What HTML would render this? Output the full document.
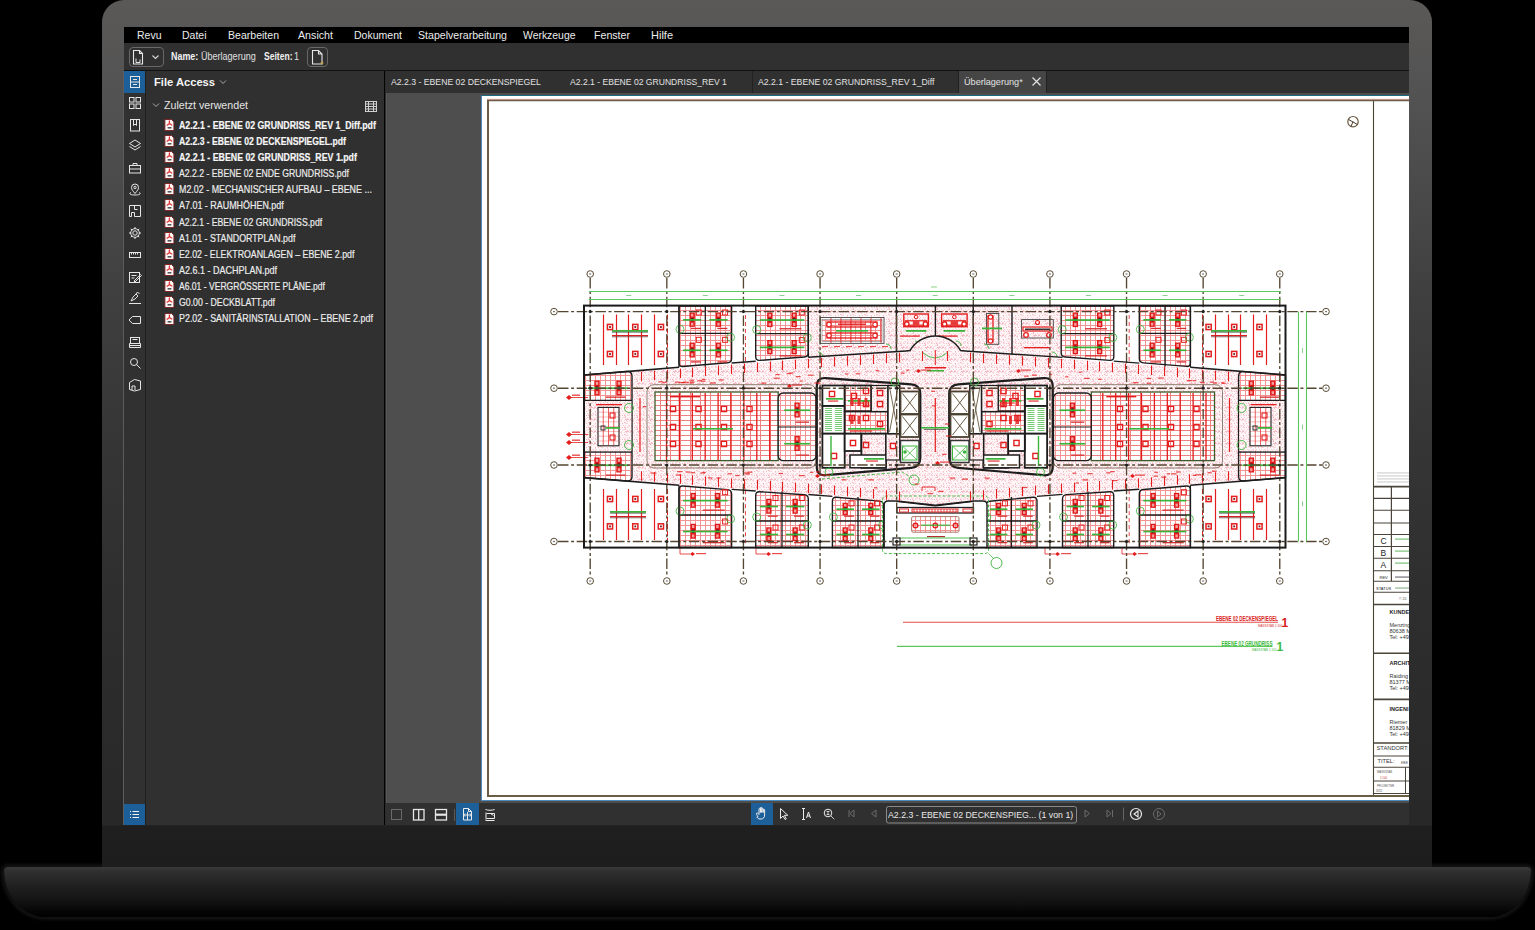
<!DOCTYPE html>
<html><head><meta charset="utf-8">
<style>
*{margin:0;padding:0;box-sizing:border-box}
html,body{width:1535px;height:930px;background:#000;overflow:hidden;font-family:"Liberation Sans",sans-serif}
div,span,svg{position:absolute}
#lid{left:102px;top:0;width:1330px;height:867px;border-radius:22px 22px 0 0;
 background:linear-gradient(to bottom,#5a5958 0px,#535252 100px,#494949 200px,#3f3f3f 300px,#353535 450px,#2e2e2e 600px,#282828 825px,#1f1f1f 826px,#1d1d1d 867px)}
#base{left:4px;top:867px;width:1527px;height:50px;border-radius:4px 4px 42px 42px/4px 4px 46px 46px;box-shadow:0 0 3px 3px #121212;
 background:linear-gradient(to bottom,#3a3a3a 0px,#303030 4px,#1f1f1f 20px,#131313 34px,#060606 44px,#000 50px)}
#menu{left:124px;top:27px;width:1285px;height:16px;background:#000}
#toolbar{left:124px;top:43px;width:1285px;height:27px;background:#303030}
#tbline{left:124px;top:70px;width:1285px;height:1px;background:#121212}
#iconstrip{left:124px;top:71px;width:21px;height:754px;background:#313131}
#stripline{left:145px;top:71px;width:1px;height:754px;background:#1f1f1f}
#edgel{left:123px;top:71px;width:1px;height:754px;background:#5a5c60}
#panel{left:146px;top:71px;width:238px;height:754px;background:#303030}
#sep{left:384px;top:71px;width:1px;height:754px;background:#030303}
#sep2{left:385px;top:71px;width:1px;height:754px;background:#2c2c2c}
#tabs{left:386px;top:71px;width:1023px;height:22px;background:#303030}
#docarea{left:386px;top:93px;width:1023px;height:710px;background:#4e4e4e;border-left:1px solid #575757}
#status{left:386px;top:803px;width:1023px;height:22px;background:#303030}
#page{left:481px;top:95px;width:928px;height:706px;background:#fff;border-left:1px solid #4d8ac0;border-top:1px solid #1b6b80;border-bottom:1px solid #4d8ac0}
.t{white-space:nowrap;color:#e6e6e6}
.blue{background:#1d5f98}

</style></head><body>
<div id="base"></div><div id="lid"></div>
<div id="menu"></div>
<span class="t" style="left:137.00px;top:28.06px;font-size:10.50px;line-height:14px;color:#ececec;transform:scaleX(0.9996);transform-origin:0 0;">Revu</span>
<span class="t" style="left:182.00px;top:28.06px;font-size:10.50px;line-height:14px;color:#ececec;transform:scaleX(0.9996);transform-origin:0 0;">Datei</span>
<span class="t" style="left:228.00px;top:28.06px;font-size:10.50px;line-height:14px;color:#ececec;transform:scaleX(1.0043);transform-origin:0 0;">Bearbeiten</span>
<span class="t" style="left:298.00px;top:28.06px;font-size:10.50px;line-height:14px;color:#ececec;transform:scaleX(1.0165);transform-origin:0 0;">Ansicht</span>
<span class="t" style="left:354.00px;top:28.06px;font-size:10.50px;line-height:14px;color:#ececec;transform:scaleX(1.0031);transform-origin:0 0;">Dokument</span>
<span class="t" style="left:418.00px;top:28.06px;font-size:10.50px;line-height:14px;color:#ececec;transform:scaleX(1.0098);transform-origin:0 0;">Stapelverarbeitung</span>
<span class="t" style="left:523.00px;top:28.06px;font-size:10.50px;line-height:14px;color:#ececec;transform:scaleX(0.9922);transform-origin:0 0;">Werkzeuge</span>
<span class="t" style="left:594.00px;top:28.06px;font-size:10.50px;line-height:14px;color:#ececec;transform:scaleX(1.0114);transform-origin:0 0;">Fenster</span>
<span class="t" style="left:651.00px;top:28.06px;font-size:10.50px;line-height:14px;color:#ececec;transform:scaleX(1.0474);transform-origin:0 0;">Hilfe</span>
<div id="toolbar"></div><div id="tbline"></div><div id="iconstrip"></div><div id="stripline"></div><div id="edgel"></div><div id="panel"></div><div id="sep"></div><div id="sep2"></div><div id="tabs"></div><div id="docarea"></div><div id="page"></div><div id="status"></div>
<div style="left:129px;top:47px;width:35px;height:20px;border:1px solid #686868;border-radius:4px"></div>
<svg style="left:129px;top:47px" width="35" height="20" viewBox="0 0 35 20">
 <path d="M4.5 3.5h6l3 3v10.5h-9z M10.5 3.5v3h3" fill="none" stroke="#e8e8e8" stroke-width="1.1"/>
 <path d="M7 15.5v-4M7 15.5h4v-3" fill="none" stroke="#e8e8e8" stroke-width="1"/>
 <path d="M23.5 8.5l3 3 3-3" fill="none" stroke="#d8d8d8" stroke-width="1.1"/>
</svg>
<div style="left:307px;top:47px;width:21px;height:20px;border:1px solid #686868;border-radius:4px"></div>
<svg style="left:307px;top:47px" width="21" height="20" viewBox="0 0 21 20">
 <path d="M5.5 3.5h6l3.5 3.5v10h-9.5z M11.5 3.5v3.5h3.5" fill="none" stroke="#e8e8e8" stroke-width="1.1"/>
 <path d="M15 14.5v3M13.5 16h3" stroke="#c9a040" stroke-width="1"/>
</svg>
<span class="t" style="left:171.20px;top:49.84px;font-size:10.00px;line-height:13px;color:#f0f0f0;font-weight:bold;transform:scaleX(0.8932);transform-origin:0 0;">Name:</span>
<span class="t" style="left:200.60px;top:49.84px;font-size:10.00px;line-height:13px;color:#e0e0e0;transform:scaleX(0.9028);transform-origin:0 0;">Überlagerung</span>
<span class="t" style="left:263.50px;top:49.84px;font-size:10.00px;line-height:13px;color:#f0f0f0;font-weight:bold;transform:scaleX(0.8549);transform-origin:0 0;">Seiten:</span>
<span class="t" style="left:293.50px;top:49.84px;font-size:10.00px;line-height:13px;color:#e0e0e0;transform:scaleX(0.8991);transform-origin:0 0;">1</span>
<div class="blue" style="left:124px;top:71px;width:21px;height:22px"></div>
<svg style="left:124px;top:70px" width="22" height="330" viewBox="0 0 22 330" fill="none" stroke="#e6e6e6" stroke-width="1">
 <g transform="translate(0,0)"><rect x="6.5" y="6.5" width="9" height="11"/><path d="M6.5 12h9M9 9.5h4M9 14.5h4"/></g>
 <g transform="translate(0,22)"><rect x="5.5" y="5.5" width="4.5" height="4.5"/><rect x="12" y="5.5" width="4.5" height="4.5"/><rect x="5.5" y="12" width="4.5" height="4.5"/><rect x="12" y="12" width="4.5" height="4.5"/></g>
 <g transform="translate(0,44)"><rect x="6.5" y="5.5" width="9" height="11.5"/><path d="M9.5 5.5v6l1.5-1.5 1.5 1.5v-6"/></g>
 <g transform="translate(0,65)"><path d="M11 5l5.5 3.5-5.5 3.5-5.5-3.5z M5.5 11.5l5.5 3.5 5.5-3.5"/></g>
 <g transform="translate(0,87)"><rect x="5.5" y="8.5" width="11" height="7.5"/><path d="M9 8.5v-2h4v2M5.5 12h11"/></g>
 <g transform="translate(0,109)"><path d="M11 14.5c-2-2.5-3.5-4-3.5-6a3.5 3.5 0 0 1 7 0c0 2-1.5 3.5-3.5 6z"/><circle cx="11" cy="8.5" r="1.2"/><path d="M7 13.5c-2 .7-2 2.5 4 2.5s6-1.8 4-2.5"/></g>
 <g transform="translate(0,130)"><path d="M5.5 5.5h11v11h-6v-4h-3v4h-2z M10.5 5.5v4h3"/></g>
 <g transform="translate(0,152)"><circle cx="11" cy="11" r="2.2"/><path d="M11 5v2M11 15v2M5 11h2M15 11h2M6.8 6.8l1.4 1.4M13.8 13.8l1.4 1.4M6.8 15.2l1.4-1.4M13.8 8.2l1.4-1.4"/><circle cx="11" cy="11" r="4.3"/></g>
 <g transform="translate(0,174)"><rect x="5.5" y="8.5" width="11" height="5"/><path d="M7.5 8.5v2M9.5 8.5v2M11.5 8.5v2M13.5 8.5v2"/></g>
 <g transform="translate(0,196)"><rect x="5.5" y="6.5" width="10" height="10"/><path d="M7.5 9.5h5M7.5 12h3M10 15l6.5-6.5 1 1-6.5 6.5z"/></g>
 <g transform="translate(0,217)"><path d="M5 16.5h12M7 14l2-4 3-3 2 2-3 3-4 2z M12 7l1.5-2 2 2"/></g>
 <g transform="translate(0,239)"><path d="M16.5 7.5h-8l-3.5 3.5 3.5 3.5h8z"/></g>
 <g transform="translate(0,261)"><rect x="6.5" y="6.5" width="9" height="6"/><path d="M5.5 12.5h11v4h-11zM5.5 14.5h11M8.5 8.5h5"/></g>
 <g transform="translate(0,282)"><circle cx="10" cy="10" r="3.5"/><path d="M12.5 12.5l4 4"/></g>
 <g transform="translate(0,304)"><path d="M5.5 8.5l5-3 6 1.5v8.5l-6 1.5-5-1.5z M8 16v-4h3v4"/></g>
</svg>
<div class="blue" style="left:124px;top:804px;width:21px;height:21px"></div>
<svg style="left:124px;top:804px" width="21" height="21" viewBox="0 0 21 21" stroke="#f0f0f0" stroke-width="1.2">
 <path d="M6 7.5h1M6 10.5h1M6 13.5h1M8.5 7.5h6.5M8.5 10.5h6.5M8.5 13.5h6.5"/>
</svg>
<span class="t" style="left:153.50px;top:75.42px;font-size:11.50px;line-height:15px;color:#f4f4f4;font-weight:bold;transform:scaleX(0.9704);transform-origin:0 0;">File Access</span>
<svg style="left:218px;top:78px" width="10" height="8" viewBox="0 0 10 8"><path d="M2 2.5l3 3 3-3" fill="none" stroke="#aaa" stroke-width="1"/></svg>
<svg style="left:151px;top:101px" width="10" height="8" viewBox="0 0 10 8"><path d="M2 2.5l3 3 3-3" fill="none" stroke="#aaa" stroke-width="1"/></svg>
<span class="t" style="left:163.50px;top:98.19px;font-size:11.00px;line-height:15px;color:#e4e4e4;transform:scaleX(0.9676);transform-origin:0 0;">Zuletzt verwendet</span>
<svg style="left:364px;top:99px" width="14" height="14" viewBox="0 0 14 14" fill="none" stroke="#d0d0d0" stroke-width="1">
 <rect x="1.5" y="2.5" width="11" height="10"/><path d="M1.5 5h11M1.5 7.5h11M1.5 10h11M4.5 2.5v10M9.5 2.5v10"/></svg>
<svg style="left:164.3px;top:118.70px" width="11" height="12" viewBox="0 0 11 12"><path d="M.9 .5h6.6l2.4 2.4v8.6h-9z" fill="#fbf7f7" stroke="#7a1c1c" stroke-width=".9"/><path d="M5.4 2v2.6M5.4 4.6l-2.3 1.6M5.4 4.6l2.4 1.4" fill="none" stroke="#e03a3a" stroke-width="1.3" stroke-linecap="round"/><rect x="3.6" y="8" width="3.8" height="1.6" fill="#555"/></svg>
<span class="t" style="left:178.60px;top:117.63px;font-size:10.60px;line-height:14px;color:#f6f6f6;font-weight:bold;transform:scaleX(0.8279);transform-origin:0 0;-webkit-text-stroke:0.2px currentColor;">A2.2.1 - EBENE 02 GRUNDRISS_REV 1_Diff.pdf</span>
<svg style="left:164.3px;top:134.85px" width="11" height="12" viewBox="0 0 11 12"><path d="M.9 .5h6.6l2.4 2.4v8.6h-9z" fill="#fbf7f7" stroke="#7a1c1c" stroke-width=".9"/><path d="M5.4 2v2.6M5.4 4.6l-2.3 1.6M5.4 4.6l2.4 1.4" fill="none" stroke="#e03a3a" stroke-width="1.3" stroke-linecap="round"/><rect x="3.6" y="8" width="3.8" height="1.6" fill="#555"/></svg>
<span class="t" style="left:178.60px;top:133.78px;font-size:10.60px;line-height:14px;color:#f6f6f6;font-weight:bold;transform:scaleX(0.8147);transform-origin:0 0;-webkit-text-stroke:0.2px currentColor;">A2.2.3 - EBENE 02 DECKENSPIEGEL.pdf</span>
<svg style="left:164.3px;top:151.00px" width="11" height="12" viewBox="0 0 11 12"><path d="M.9 .5h6.6l2.4 2.4v8.6h-9z" fill="#fbf7f7" stroke="#7a1c1c" stroke-width=".9"/><path d="M5.4 2v2.6M5.4 4.6l-2.3 1.6M5.4 4.6l2.4 1.4" fill="none" stroke="#e03a3a" stroke-width="1.3" stroke-linecap="round"/><rect x="3.6" y="8" width="3.8" height="1.6" fill="#555"/></svg>
<span class="t" style="left:178.60px;top:149.93px;font-size:10.60px;line-height:14px;color:#f6f6f6;font-weight:bold;transform:scaleX(0.8302);transform-origin:0 0;-webkit-text-stroke:0.2px currentColor;">A2.2.1 - EBENE 02 GRUNDRISS_REV 1.pdf</span>
<svg style="left:164.3px;top:167.15px" width="11" height="12" viewBox="0 0 11 12"><path d="M.9 .5h6.6l2.4 2.4v8.6h-9z" fill="#fbf7f7" stroke="#7a1c1c" stroke-width=".9"/><path d="M5.4 2v2.6M5.4 4.6l-2.3 1.6M5.4 4.6l2.4 1.4" fill="none" stroke="#e03a3a" stroke-width="1.3" stroke-linecap="round"/><rect x="3.6" y="8" width="3.8" height="1.6" fill="#555"/></svg>
<span class="t" style="left:178.60px;top:166.08px;font-size:10.60px;line-height:14px;color:#ececec;transform:scaleX(0.8198);transform-origin:0 0;-webkit-text-stroke:0.2px currentColor;">A2.2.2 - EBENE 02 ENDE GRUNDRISS.pdf</span>
<svg style="left:164.3px;top:183.30px" width="11" height="12" viewBox="0 0 11 12"><path d="M.9 .5h6.6l2.4 2.4v8.6h-9z" fill="#fbf7f7" stroke="#7a1c1c" stroke-width=".9"/><path d="M5.4 2v2.6M5.4 4.6l-2.3 1.6M5.4 4.6l2.4 1.4" fill="none" stroke="#e03a3a" stroke-width="1.3" stroke-linecap="round"/><rect x="3.6" y="8" width="3.8" height="1.6" fill="#555"/></svg>
<span class="t" style="left:178.60px;top:182.23px;font-size:10.60px;line-height:14px;color:#ececec;transform:scaleX(0.8401);transform-origin:0 0;-webkit-text-stroke:0.2px currentColor;">M2.02 - MECHANISCHER AUFBAU – EBENE ...</span>
<svg style="left:164.3px;top:199.45px" width="11" height="12" viewBox="0 0 11 12"><path d="M.9 .5h6.6l2.4 2.4v8.6h-9z" fill="#fbf7f7" stroke="#7a1c1c" stroke-width=".9"/><path d="M5.4 2v2.6M5.4 4.6l-2.3 1.6M5.4 4.6l2.4 1.4" fill="none" stroke="#e03a3a" stroke-width="1.3" stroke-linecap="round"/><rect x="3.6" y="8" width="3.8" height="1.6" fill="#555"/></svg>
<span class="t" style="left:178.60px;top:198.38px;font-size:10.60px;line-height:14px;color:#ececec;transform:scaleX(0.8432);transform-origin:0 0;-webkit-text-stroke:0.2px currentColor;">A7.01 - RAUMHÖHEN.pdf</span>
<svg style="left:164.3px;top:215.60px" width="11" height="12" viewBox="0 0 11 12"><path d="M.9 .5h6.6l2.4 2.4v8.6h-9z" fill="#fbf7f7" stroke="#7a1c1c" stroke-width=".9"/><path d="M5.4 2v2.6M5.4 4.6l-2.3 1.6M5.4 4.6l2.4 1.4" fill="none" stroke="#e03a3a" stroke-width="1.3" stroke-linecap="round"/><rect x="3.6" y="8" width="3.8" height="1.6" fill="#555"/></svg>
<span class="t" style="left:178.60px;top:214.53px;font-size:10.60px;line-height:14px;color:#ececec;transform:scaleX(0.8185);transform-origin:0 0;-webkit-text-stroke:0.2px currentColor;">A2.2.1 - EBENE 02 GRUNDRISS.pdf</span>
<svg style="left:164.3px;top:231.75px" width="11" height="12" viewBox="0 0 11 12"><path d="M.9 .5h6.6l2.4 2.4v8.6h-9z" fill="#fbf7f7" stroke="#7a1c1c" stroke-width=".9"/><path d="M5.4 2v2.6M5.4 4.6l-2.3 1.6M5.4 4.6l2.4 1.4" fill="none" stroke="#e03a3a" stroke-width="1.3" stroke-linecap="round"/><rect x="3.6" y="8" width="3.8" height="1.6" fill="#555"/></svg>
<span class="t" style="left:178.60px;top:230.68px;font-size:10.60px;line-height:14px;color:#ececec;transform:scaleX(0.8326);transform-origin:0 0;-webkit-text-stroke:0.2px currentColor;">A1.01 - STANDORTPLAN.pdf</span>
<svg style="left:164.3px;top:247.90px" width="11" height="12" viewBox="0 0 11 12"><path d="M.9 .5h6.6l2.4 2.4v8.6h-9z" fill="#fbf7f7" stroke="#7a1c1c" stroke-width=".9"/><path d="M5.4 2v2.6M5.4 4.6l-2.3 1.6M5.4 4.6l2.4 1.4" fill="none" stroke="#e03a3a" stroke-width="1.3" stroke-linecap="round"/><rect x="3.6" y="8" width="3.8" height="1.6" fill="#555"/></svg>
<span class="t" style="left:178.60px;top:246.83px;font-size:10.60px;line-height:14px;color:#ececec;transform:scaleX(0.8298);transform-origin:0 0;-webkit-text-stroke:0.2px currentColor;">E2.02 - ELEKTROANLAGEN – EBENE 2.pdf</span>
<svg style="left:164.3px;top:264.05px" width="11" height="12" viewBox="0 0 11 12"><path d="M.9 .5h6.6l2.4 2.4v8.6h-9z" fill="#fbf7f7" stroke="#7a1c1c" stroke-width=".9"/><path d="M5.4 2v2.6M5.4 4.6l-2.3 1.6M5.4 4.6l2.4 1.4" fill="none" stroke="#e03a3a" stroke-width="1.3" stroke-linecap="round"/><rect x="3.6" y="8" width="3.8" height="1.6" fill="#555"/></svg>
<span class="t" style="left:178.60px;top:262.98px;font-size:10.60px;line-height:14px;color:#ececec;transform:scaleX(0.8487);transform-origin:0 0;-webkit-text-stroke:0.2px currentColor;">A2.6.1 - DACHPLAN.pdf</span>
<svg style="left:164.3px;top:280.20px" width="11" height="12" viewBox="0 0 11 12"><path d="M.9 .5h6.6l2.4 2.4v8.6h-9z" fill="#fbf7f7" stroke="#7a1c1c" stroke-width=".9"/><path d="M5.4 2v2.6M5.4 4.6l-2.3 1.6M5.4 4.6l2.4 1.4" fill="none" stroke="#e03a3a" stroke-width="1.3" stroke-linecap="round"/><rect x="3.6" y="8" width="3.8" height="1.6" fill="#555"/></svg>
<span class="t" style="left:178.60px;top:279.13px;font-size:10.60px;line-height:14px;color:#ececec;transform:scaleX(0.8081);transform-origin:0 0;-webkit-text-stroke:0.2px currentColor;">A6.01 - VERGRÖSSERTE PLÄNE.pdf</span>
<svg style="left:164.3px;top:296.35px" width="11" height="12" viewBox="0 0 11 12"><path d="M.9 .5h6.6l2.4 2.4v8.6h-9z" fill="#fbf7f7" stroke="#7a1c1c" stroke-width=".9"/><path d="M5.4 2v2.6M5.4 4.6l-2.3 1.6M5.4 4.6l2.4 1.4" fill="none" stroke="#e03a3a" stroke-width="1.3" stroke-linecap="round"/><rect x="3.6" y="8" width="3.8" height="1.6" fill="#555"/></svg>
<span class="t" style="left:178.60px;top:295.28px;font-size:10.60px;line-height:14px;color:#ececec;transform:scaleX(0.8244);transform-origin:0 0;-webkit-text-stroke:0.2px currentColor;">G0.00 - DECKBLATT.pdf</span>
<svg style="left:164.3px;top:312.50px" width="11" height="12" viewBox="0 0 11 12"><path d="M.9 .5h6.6l2.4 2.4v8.6h-9z" fill="#fbf7f7" stroke="#7a1c1c" stroke-width=".9"/><path d="M5.4 2v2.6M5.4 4.6l-2.3 1.6M5.4 4.6l2.4 1.4" fill="none" stroke="#e03a3a" stroke-width="1.3" stroke-linecap="round"/><rect x="3.6" y="8" width="3.8" height="1.6" fill="#555"/></svg>
<span class="t" style="left:178.60px;top:311.43px;font-size:10.60px;line-height:14px;color:#ececec;transform:scaleX(0.8394);transform-origin:0 0;-webkit-text-stroke:0.2px currentColor;">P2.02 - SANITÄRINSTALLATION – EBENE 2.pdf</span>
<div style="left:752px;top:71px;width:1px;height:22px;background:#222"></div>
<div style="left:958px;top:71px;width:89px;height:22px;background:#454545;border-left:1px solid #222;border-right:1px solid #222"></div>
<span class="t" style="left:390.80px;top:75.17px;font-size:9.60px;line-height:13px;color:#e2e2e2;transform:scaleX(0.9040);transform-origin:0 0;">A2.2.3 - EBENE 02 DECKENSPIEGEL</span>
<span class="t" style="left:570.30px;top:75.17px;font-size:9.60px;line-height:13px;color:#e2e2e2;transform:scaleX(0.8944);transform-origin:0 0;">A2.2.1 - EBENE 02 GRUNDRISS_REV 1</span>
<span class="t" style="left:757.50px;top:75.17px;font-size:9.60px;line-height:13px;color:#e2e2e2;transform:scaleX(0.9047);transform-origin:0 0;">A2.2.1 - EBENE 02 GRUNDRISS_REV 1_Diff</span>
<span class="t" style="left:963.80px;top:75.17px;font-size:9.60px;line-height:13px;color:#e2e2e2;transform:scaleX(0.9483);transform-origin:0 0;">Überlagerung*</span>
<svg style="left:1031px;top:76px" width="11" height="11" viewBox="0 0 11 11"><path d="M1.5 1.5l8 8M9.5 1.5l-8 8" stroke="#e0e0e0" stroke-width="1.2"/></svg>
<svg style="left:386px;top:803px" width="1023" height="22" viewBox="386 803 1023 22" fill="none" stroke="#e6e6e6" stroke-width="1">
 <rect x="391.5" y="809.5" width="10" height="10" stroke="#6a6a6a"/>
 <rect x="413.5" y="809.5" width="10.5" height="10.5" stroke-width="1.3"/><path d="M418.7 809.5v10.5" stroke-width="1.3"/>
 <rect x="435.5" y="809.5" width="11" height="10.5" stroke-width="1.3"/><path d="M435.5 814.7h11" stroke-width="2.2"/>
 <path d="M454.5 809v12" stroke="#5a5a5a"/>
</svg>
<div class="blue" style="left:456px;top:803px;width:23px;height:22px"></div>
<svg style="left:386px;top:803px" width="1023" height="22" viewBox="386 803 1023 22" fill="none" stroke="#ececec" stroke-width="1">
 <path d="M463.5 808.5h5l3 3v8.5h-8z M468.5 808.5v3h3 M467.5 812v8 M463.5 815h8 M465 813.5l-1.5 1.5 1.5 1.5 M470 813.5l1.5 1.5-1.5 1.5"/>
 <path d="M485.5 809.5c2 1 7 1 9 0 M485.5 820.5h9 M486 812.5v7 M486.5 813.5h8v5h-8 M490.5 813.5l3 2" />
 <path d="M751 803h0"/>
</svg>
<div class="blue" style="left:751px;top:803px;width:22px;height:22px"></div>
<svg style="left:386px;top:803px" width="1023" height="22" viewBox="386 803 1023 22" fill="none" stroke="#ececec" stroke-width="1">
 <path d="M758 816.5c-1.2-1.5-2-3-1.2-3.5.7-.4 1.6.6 2.2 1.5v-5.5c0-1 1.4-1 1.4 0v3.5-4.5c0-1 1.4-1 1.4 0v4.5-3.5c0-1 1.4-1 1.4 0v3.5-2.5c0-1 1.4-1 1.4 0v5c0 2.5-1.4 4-3.6 4h-1c-1.5 0-2.3-.8-3.2-2z"/>
 <path d="M780.5 808.5v10l2.5-2.5 2 3.5 1.3-.7-2-3.5h3.5z"/>
 <path d="M802 808.5h3M802 819.5h3M803.5 808.5v11 M806.5 818l2-6 2 6M807.2 816h2.6"/>
 <circle cx="828" cy="813" r="3.8"/><path d="M830.8 815.8l3.5 3.5M826.5 811.5h3M826.5 814.5h3M828 811.5v3" stroke-width=".8"/>
 <path d="M849 810v7M854 810l-4 3.5 4 3.5z" stroke="#6a6a6a"/>
 <path d="M876 810l-4.5 3.5 4.5 3.5z" stroke="#6a6a6a"/>
 <rect x="886.5" y="806.5" width="190" height="16.5" rx="2" stroke="#8a8a8a"/>
 <path d="M1085 810l4.5 3.5-4.5 3.5z" stroke="#6a6a6a"/>
 <path d="M1107 810l4 3.5-4 3.5z M1112.5 810v7" stroke="#6a6a6a"/>
 <path d="M1123.5 807.5v13" stroke="#666"/>
 <circle cx="1136" cy="814" r="5.5" stroke-width="1.2"/><path d="M1138 811l-4 3 4 3z" stroke-width="1.1"/>
 <circle cx="1159" cy="814" r="5.5" stroke="#6a6a6a"/><path d="M1157.5 811l3.5 3-3.5 3z" stroke="#6a6a6a"/>
</svg>
<span class="t" style="left:888.20px;top:807.77px;font-size:9.60px;line-height:13px;color:#e8e8e8;transform:scaleX(0.9140);transform-origin:0 0;">A2.2.3 - EBENE 02 DECKENSPIEG... (1 von 1)</span><svg style="left:0;top:0" width="1535" height="930" viewBox="0 0 1535 930"><defs>
<clipPath id="pg"><rect x="483" y="96" width="926" height="704"/></clipPath>
<pattern id="dots" patternUnits="userSpaceOnUse" width="12" height="12"><rect width="12" height="12" fill="#fff6f7"/><rect x="0" y="0" width="1" height="1" fill="#f9d4da"/><rect x="2" y="0" width="1" height="1" fill="#f4b9c2"/><rect x="5" y="0" width="1" height="1" fill="#f9d4da"/><rect x="6" y="0" width="1" height="1" fill="#f9d4da"/><rect x="8" y="0" width="1" height="1" fill="#f9d4da"/><rect x="9" y="0" width="1" height="1" fill="#f9d4da"/><rect x="3" y="1" width="1" height="1" fill="#f9d4da"/><rect x="9" y="1" width="1" height="1" fill="#f9d4da"/><rect x="0" y="2" width="1" height="1" fill="#f4b9c2"/><rect x="1" y="2" width="1" height="1" fill="#f9d4da"/><rect x="1" y="3" width="1" height="1" fill="#f9d4da"/><rect x="2" y="3" width="1" height="1" fill="#f9d4da"/><rect x="3" y="3" width="1" height="1" fill="#f9d4da"/><rect x="7" y="3" width="1" height="1" fill="#f4b9c2"/><rect x="10" y="3" width="1" height="1" fill="#f4b9c2"/><rect x="7" y="4" width="1" height="1" fill="#f9d4da"/><rect x="1" y="5" width="1" height="1" fill="#f9d4da"/><rect x="4" y="5" width="1" height="1" fill="#f9d4da"/><rect x="5" y="5" width="1" height="1" fill="#f9d4da"/><rect x="8" y="5" width="1" height="1" fill="#f9d4da"/><rect x="11" y="5" width="1" height="1" fill="#f9d4da"/><rect x="0" y="6" width="1" height="1" fill="#f9d4da"/><rect x="3" y="6" width="1" height="1" fill="#f9d4da"/><rect x="5" y="6" width="1" height="1" fill="#f9d4da"/><rect x="7" y="6" width="1" height="1" fill="#f4b9c2"/><rect x="0" y="7" width="1" height="1" fill="#f4b9c2"/><rect x="1" y="7" width="1" height="1" fill="#f9d4da"/><rect x="3" y="7" width="1" height="1" fill="#f9d4da"/><rect x="4" y="7" width="1" height="1" fill="#f9d4da"/><rect x="7" y="7" width="1" height="1" fill="#f9d4da"/><rect x="8" y="7" width="1" height="1" fill="#f9d4da"/><rect x="10" y="7" width="1" height="1" fill="#f4b9c2"/><rect x="1" y="8" width="1" height="1" fill="#f4b9c2"/><rect x="0" y="9" width="1" height="1" fill="#f9d4da"/><rect x="1" y="9" width="1" height="1" fill="#f4b9c2"/><rect x="5" y="9" width="1" height="1" fill="#f9d4da"/><rect x="8" y="9" width="1" height="1" fill="#f9d4da"/><rect x="11" y="9" width="1" height="1" fill="#f9d4da"/><rect x="3" y="10" width="1" height="1" fill="#f4b9c2"/><rect x="6" y="10" width="1" height="1" fill="#f9d4da"/><rect x="7" y="10" width="1" height="1" fill="#f9d4da"/><rect x="10" y="10" width="1" height="1" fill="#f9d4da"/><rect x="1" y="11" width="1" height="1" fill="#f4b9c2"/><rect x="2" y="11" width="1" height="1" fill="#f4b9c2"/><rect x="3" y="11" width="1" height="1" fill="#f4b9c2"/><rect x="4" y="11" width="1" height="1" fill="#f4b9c2"/><rect x="6" y="11" width="1" height="1" fill="#f4b9c2"/><rect x="7" y="11" width="1" height="1" fill="#f4b9c2"/><rect x="9" y="11" width="1" height="1" fill="#f9d4da"/></pattern>
<pattern id="grid" patternUnits="userSpaceOnUse" width="5" height="5"><rect width="5" height="5" fill="#fff"/><rect x="0" y="0" width="5" height="1" fill="#f29494"/><rect x="0" y="0" width="1" height="5" fill="#f29494"/></pattern>
<pattern id="grid2" patternUnits="userSpaceOnUse" width="10" height="5"><rect width="10" height="5" fill="#fff"/><rect x="0" y="0" width="10" height="1" fill="#ee8080"/><rect x="0" y="0" width="1" height="5" fill="#ee8080"/></pattern>
</defs>
<g clip-path="url(#pg)">
<path d="M584 375 L934.75 349.53 L1285.5 375 L1285.5 477.6 L934.75 504.96 L584 477.6Z" fill="url(#dots)"/>
<path d="M808.3 306 L1062.5 306 L1062.5 357.34 L808.3 357.25Z" fill="url(#dots)"/>
<line x1="603.5" y1="314.5" x2="603.5" y2="365" stroke="#e41e1e" stroke-width="1.2"/>
<line x1="616.5" y1="314.5" x2="616.5" y2="365" stroke="#e41e1e" stroke-width="1.2"/>
<line x1="628.5" y1="314.5" x2="628.5" y2="365" stroke="#e41e1e" stroke-width="1.2"/>
<line x1="641.5" y1="314.5" x2="641.5" y2="365" stroke="#e41e1e" stroke-width="1.2"/>
<line x1="654.5" y1="314.5" x2="654.5" y2="365" stroke="#e41e1e" stroke-width="1.2"/>
<line x1="667.5" y1="314.5" x2="667.5" y2="365" stroke="#e41e1e" stroke-width="1" stroke-dasharray="5 2"/>
<rect x="607.4" y="324.4" width="5.2" height="5.2" fill="none" stroke="#e41e1e" stroke-width="1.5"/>
<rect x="609.1" y="326.1" width="1.8" height="1.8" fill="#6a2020"/>
<rect x="632.7" y="324.4" width="5.2" height="5.2" fill="none" stroke="#e41e1e" stroke-width="1.5"/>
<rect x="634.4" y="326.1" width="1.8" height="1.8" fill="#6a2020"/>
<rect x="658.3" y="324.4" width="5.2" height="5.2" fill="none" stroke="#e41e1e" stroke-width="1.5"/>
<rect x="660" y="326.1" width="1.8" height="1.8" fill="#6a2020"/>
<rect x="607.4" y="351.4" width="5.2" height="5.2" fill="none" stroke="#e41e1e" stroke-width="1.5"/>
<rect x="609.1" y="353.1" width="1.8" height="1.8" fill="#6a2020"/>
<rect x="632.7" y="351.4" width="5.2" height="5.2" fill="none" stroke="#e41e1e" stroke-width="1.5"/>
<rect x="634.4" y="353.1" width="1.8" height="1.8" fill="#6a2020"/>
<rect x="658.3" y="351.4" width="5.2" height="5.2" fill="none" stroke="#e41e1e" stroke-width="1.5"/>
<rect x="660" y="353.1" width="1.8" height="1.8" fill="#6a2020"/>
<line x1="1202.5" y1="314.5" x2="1202.5" y2="365" stroke="#e41e1e" stroke-width="1" stroke-dasharray="5 2"/>
<line x1="1215.5" y1="314.5" x2="1215.5" y2="365" stroke="#e41e1e" stroke-width="1.2"/>
<line x1="1228.5" y1="314.5" x2="1228.5" y2="365" stroke="#e41e1e" stroke-width="1.2"/>
<line x1="1240.5" y1="314.5" x2="1240.5" y2="365" stroke="#e41e1e" stroke-width="1.2"/>
<line x1="1253.5" y1="314.5" x2="1253.5" y2="365" stroke="#e41e1e" stroke-width="1.2"/>
<line x1="1266.5" y1="314.5" x2="1266.5" y2="365" stroke="#e41e1e" stroke-width="1.2"/>
<rect x="1256.9" y="324.4" width="5.2" height="5.2" fill="none" stroke="#e41e1e" stroke-width="1.5"/>
<rect x="1258.6" y="326.1" width="1.8" height="1.8" fill="#6a2020"/>
<rect x="1231.6" y="324.4" width="5.2" height="5.2" fill="none" stroke="#e41e1e" stroke-width="1.5"/>
<rect x="1233.3" y="326.1" width="1.8" height="1.8" fill="#6a2020"/>
<rect x="1206" y="324.4" width="5.2" height="5.2" fill="none" stroke="#e41e1e" stroke-width="1.5"/>
<rect x="1207.7" y="326.1" width="1.8" height="1.8" fill="#6a2020"/>
<rect x="1256.9" y="351.4" width="5.2" height="5.2" fill="none" stroke="#e41e1e" stroke-width="1.5"/>
<rect x="1258.6" y="353.1" width="1.8" height="1.8" fill="#6a2020"/>
<rect x="1231.6" y="351.4" width="5.2" height="5.2" fill="none" stroke="#e41e1e" stroke-width="1.5"/>
<rect x="1233.3" y="353.1" width="1.8" height="1.8" fill="#6a2020"/>
<rect x="1206" y="351.4" width="5.2" height="5.2" fill="none" stroke="#e41e1e" stroke-width="1.5"/>
<rect x="1207.7" y="353.1" width="1.8" height="1.8" fill="#6a2020"/>
<line x1="603.5" y1="489" x2="603.5" y2="540" stroke="#e41e1e" stroke-width="1.2"/>
<line x1="616.5" y1="489" x2="616.5" y2="540" stroke="#e41e1e" stroke-width="1.2"/>
<line x1="628.5" y1="489" x2="628.5" y2="540" stroke="#e41e1e" stroke-width="1.2"/>
<line x1="641.5" y1="489" x2="641.5" y2="540" stroke="#e41e1e" stroke-width="1.2"/>
<line x1="654.5" y1="489" x2="654.5" y2="540" stroke="#e41e1e" stroke-width="1.2"/>
<line x1="667.5" y1="489" x2="667.5" y2="540" stroke="#e41e1e" stroke-width="1" stroke-dasharray="5 2"/>
<rect x="607.4" y="496.4" width="5.2" height="5.2" fill="none" stroke="#e41e1e" stroke-width="1.5"/>
<rect x="609.1" y="498.1" width="1.8" height="1.8" fill="#6a2020"/>
<rect x="632.7" y="496.4" width="5.2" height="5.2" fill="none" stroke="#e41e1e" stroke-width="1.5"/>
<rect x="634.4" y="498.1" width="1.8" height="1.8" fill="#6a2020"/>
<rect x="658.3" y="496.4" width="5.2" height="5.2" fill="none" stroke="#e41e1e" stroke-width="1.5"/>
<rect x="660" y="498.1" width="1.8" height="1.8" fill="#6a2020"/>
<rect x="607.4" y="523.8" width="5.2" height="5.2" fill="none" stroke="#e41e1e" stroke-width="1.5"/>
<rect x="609.1" y="525.5" width="1.8" height="1.8" fill="#6a2020"/>
<rect x="632.7" y="523.8" width="5.2" height="5.2" fill="none" stroke="#e41e1e" stroke-width="1.5"/>
<rect x="634.4" y="525.5" width="1.8" height="1.8" fill="#6a2020"/>
<rect x="658.3" y="523.8" width="5.2" height="5.2" fill="none" stroke="#e41e1e" stroke-width="1.5"/>
<rect x="660" y="525.5" width="1.8" height="1.8" fill="#6a2020"/>
<line x1="1202.5" y1="489" x2="1202.5" y2="540" stroke="#e41e1e" stroke-width="1" stroke-dasharray="5 2"/>
<line x1="1215.5" y1="489" x2="1215.5" y2="540" stroke="#e41e1e" stroke-width="1.2"/>
<line x1="1228.5" y1="489" x2="1228.5" y2="540" stroke="#e41e1e" stroke-width="1.2"/>
<line x1="1240.5" y1="489" x2="1240.5" y2="540" stroke="#e41e1e" stroke-width="1.2"/>
<line x1="1253.5" y1="489" x2="1253.5" y2="540" stroke="#e41e1e" stroke-width="1.2"/>
<line x1="1266.5" y1="489" x2="1266.5" y2="540" stroke="#e41e1e" stroke-width="1.2"/>
<rect x="1256.9" y="496.4" width="5.2" height="5.2" fill="none" stroke="#e41e1e" stroke-width="1.5"/>
<rect x="1258.6" y="498.1" width="1.8" height="1.8" fill="#6a2020"/>
<rect x="1231.6" y="496.4" width="5.2" height="5.2" fill="none" stroke="#e41e1e" stroke-width="1.5"/>
<rect x="1233.3" y="498.1" width="1.8" height="1.8" fill="#6a2020"/>
<rect x="1206" y="496.4" width="5.2" height="5.2" fill="none" stroke="#e41e1e" stroke-width="1.5"/>
<rect x="1207.7" y="498.1" width="1.8" height="1.8" fill="#6a2020"/>
<rect x="1256.9" y="523.8" width="5.2" height="5.2" fill="none" stroke="#e41e1e" stroke-width="1.5"/>
<rect x="1258.6" y="525.5" width="1.8" height="1.8" fill="#6a2020"/>
<rect x="1231.6" y="523.8" width="5.2" height="5.2" fill="none" stroke="#e41e1e" stroke-width="1.5"/>
<rect x="1233.3" y="525.5" width="1.8" height="1.8" fill="#6a2020"/>
<rect x="1206" y="523.8" width="5.2" height="5.2" fill="none" stroke="#e41e1e" stroke-width="1.5"/>
<rect x="1207.7" y="525.5" width="1.8" height="1.8" fill="#6a2020"/>
<rect x="612" y="330" width="36" height="1.8" fill="#3cb43c"/>
<rect x="612" y="331.8" width="36" height="0.7" fill="#444"/>
<rect x="612" y="335" width="36" height="1.4" fill="#d82020"/>
<rect x="612" y="336.6" width="36" height="0.6" fill="#444"/>
<rect x="1211" y="330" width="36" height="1.8" fill="#3cb43c"/>
<rect x="1211" y="331.8" width="36" height="0.7" fill="#444"/>
<rect x="1211" y="335" width="36" height="1.4" fill="#d82020"/>
<rect x="1211" y="336.6" width="36" height="0.6" fill="#444"/>
<rect x="610" y="511" width="36" height="1.8" fill="#3cb43c"/>
<rect x="610" y="512.8" width="36" height="0.7" fill="#444"/>
<rect x="610" y="516" width="36" height="1.4" fill="#d82020"/>
<rect x="610" y="517.6" width="36" height="0.6" fill="#444"/>
<rect x="1219" y="511" width="36" height="1.8" fill="#3cb43c"/>
<rect x="1219" y="512.8" width="36" height="0.7" fill="#444"/>
<rect x="1219" y="516" width="36" height="1.4" fill="#d82020"/>
<rect x="1219" y="517.6" width="36" height="0.6" fill="#444"/>
<path d="M679 306 Q679 306 679 306L731.6 306 Q731.6 306 731.6 306L731.6 358.48 Q731.6 362.48 727.61 362.8L682.99 366.43 Q679 366.76 679 362.76Z" fill="url(#grid)" stroke="#1d1d1d" stroke-width="1.4"/>
<line x1="705.3" y1="306" x2="705.3" y2="366.76" stroke="#1d1d1d" stroke-width="1.3"/>
<line x1="679" y1="333.3" x2="731.6" y2="333.3" stroke="#1d1d1d" stroke-width="1.3"/>
<rect x="689.45" y="312.43" width="5.4" height="14.45" fill="#e01818"/>
<rect x="690.95" y="313.73" width="2.4" height="2.89" fill="#f4a0a0"/>
<rect x="690.95" y="322.68" width="2.4" height="2.89" fill="#f4a0a0"/>
<circle cx="692.15" cy="319.65" r="1.7" fill="#2a2a2a"/>
<rect x="683" y="319.05" width="18.3" height="1.7" fill="#3cb43c"/>
<rect x="691.03" y="327.8" width="10.03" height="1.3" fill="#d83030"/>
<rect x="696.3" y="310" width="5" height="5" fill="none" stroke="#e41e1e" stroke-width="1"/>
<rect x="689.45" y="342.53" width="5.4" height="15" fill="#e01818"/>
<rect x="690.95" y="343.83" width="2.4" height="3" fill="#f4a0a0"/>
<rect x="690.95" y="353.23" width="2.4" height="3" fill="#f4a0a0"/>
<circle cx="692.15" cy="350.03" r="1.7" fill="#2a2a2a"/>
<rect x="683" y="349.43" width="18.3" height="1.7" fill="#3cb43c"/>
<rect x="691.03" y="361.26" width="10.03" height="1.3" fill="#d83030"/>
<rect x="696.3" y="337.3" width="5" height="5" fill="none" stroke="#e41e1e" stroke-width="1"/>
<rect x="715.75" y="312.43" width="5.4" height="14.45" fill="#e01818"/>
<rect x="717.25" y="313.73" width="2.4" height="2.89" fill="#f4a0a0"/>
<rect x="717.25" y="322.68" width="2.4" height="2.89" fill="#f4a0a0"/>
<circle cx="718.45" cy="319.65" r="1.7" fill="#2a2a2a"/>
<rect x="709.3" y="319.05" width="18.3" height="1.7" fill="#3cb43c"/>
<rect x="717.34" y="327.8" width="10.04" height="1.3" fill="#d83030"/>
<rect x="722.6" y="310" width="5" height="5" fill="none" stroke="#e41e1e" stroke-width="1"/>
<rect x="715.75" y="342.53" width="5.4" height="15" fill="#e01818"/>
<rect x="717.25" y="343.83" width="2.4" height="3" fill="#f4a0a0"/>
<rect x="717.25" y="353.23" width="2.4" height="3" fill="#f4a0a0"/>
<circle cx="718.45" cy="350.03" r="1.7" fill="#2a2a2a"/>
<rect x="709.3" y="349.43" width="18.3" height="1.7" fill="#3cb43c"/>
<rect x="717.34" y="361.26" width="10.04" height="1.3" fill="#d83030"/>
<rect x="722.6" y="337.3" width="5" height="5" fill="none" stroke="#e41e1e" stroke-width="1"/>
<circle cx="680" cy="329.3" r="4" fill="none" stroke="#3cb43c" stroke-width="0.8"/>
<circle cx="730.6" cy="337.3" r="4" fill="none" stroke="#3cb43c" stroke-width="0.8"/>
<path d="M755.7 306 Q755.7 306 755.7 306L808.3 306 Q808.3 306 808.3 306L808.3 352.75 Q808.3 356.75 804.31 357.05L759.69 360.38 Q755.7 360.68 755.7 356.68Z" fill="url(#grid)" stroke="#1d1d1d" stroke-width="1.4"/>
<line x1="755.7" y1="333.6" x2="808.3" y2="333.6" stroke="#1d1d1d" stroke-width="1.3"/>
<rect x="767.15" y="312.48" width="5.4" height="14.63" fill="#e01818"/>
<rect x="768.65" y="313.78" width="2.4" height="2.93" fill="#f4a0a0"/>
<rect x="768.65" y="322.89" width="2.4" height="2.93" fill="#f4a0a0"/>
<circle cx="769.85" cy="319.8" r="1.7" fill="#2a2a2a"/>
<rect x="791.45" y="312.48" width="5.4" height="14.63" fill="#e01818"/>
<rect x="792.95" y="313.78" width="2.4" height="2.93" fill="#f4a0a0"/>
<rect x="792.95" y="322.89" width="2.4" height="2.93" fill="#f4a0a0"/>
<circle cx="794.15" cy="319.8" r="1.7" fill="#2a2a2a"/>
<rect x="759.7" y="319.2" width="44.6" height="1.7" fill="#3cb43c"/>
<rect x="779.57" y="328.1" width="21.87" height="1.3" fill="#d83030"/>
<rect x="799.3" y="310" width="5" height="5" fill="none" stroke="#e41e1e" stroke-width="1"/>
<rect x="767.15" y="339.98" width="5.4" height="14.31" fill="#e01818"/>
<rect x="768.65" y="341.28" width="2.4" height="2.86" fill="#f4a0a0"/>
<rect x="768.65" y="350.13" width="2.4" height="2.86" fill="#f4a0a0"/>
<circle cx="769.85" cy="347.14" r="1.7" fill="#2a2a2a"/>
<rect x="791.45" y="339.98" width="5.4" height="14.31" fill="#e01818"/>
<rect x="792.95" y="341.28" width="2.4" height="2.86" fill="#f4a0a0"/>
<rect x="792.95" y="350.13" width="2.4" height="2.86" fill="#f4a0a0"/>
<circle cx="794.15" cy="347.14" r="1.7" fill="#2a2a2a"/>
<rect x="759.7" y="346.54" width="44.6" height="1.7" fill="#3cb43c"/>
<rect x="779.57" y="355.18" width="21.87" height="1.3" fill="#d83030"/>
<rect x="799.3" y="337.6" width="5" height="5" fill="none" stroke="#e41e1e" stroke-width="1"/>
<circle cx="756.7" cy="329.6" r="4" fill="none" stroke="#3cb43c" stroke-width="0.8"/>
<circle cx="807.3" cy="337.6" r="4" fill="none" stroke="#3cb43c" stroke-width="0.8"/>
<path d="M1061.2 306 Q1061.2 306 1061.2 306L1113.8 306 Q1113.8 306 1113.8 306L1113.8 356.68 Q1113.8 360.68 1109.81 360.38L1065.19 357.05 Q1061.2 356.75 1061.2 352.75Z" fill="url(#grid)" stroke="#1d1d1d" stroke-width="1.4"/>
<line x1="1061.2" y1="333.6" x2="1113.8" y2="333.6" stroke="#1d1d1d" stroke-width="1.3"/>
<rect x="1072.65" y="312.48" width="5.4" height="14.63" fill="#e01818"/>
<rect x="1074.15" y="313.78" width="2.4" height="2.93" fill="#f4a0a0"/>
<rect x="1074.15" y="322.89" width="2.4" height="2.93" fill="#f4a0a0"/>
<circle cx="1075.35" cy="319.8" r="1.7" fill="#2a2a2a"/>
<rect x="1096.95" y="312.48" width="5.4" height="14.63" fill="#e01818"/>
<rect x="1098.45" y="313.78" width="2.4" height="2.93" fill="#f4a0a0"/>
<rect x="1098.45" y="322.89" width="2.4" height="2.93" fill="#f4a0a0"/>
<circle cx="1099.65" cy="319.8" r="1.7" fill="#2a2a2a"/>
<rect x="1065.2" y="319.2" width="44.6" height="1.7" fill="#3cb43c"/>
<rect x="1085.07" y="328.1" width="21.87" height="1.3" fill="#d83030"/>
<rect x="1104.8" y="310" width="5" height="5" fill="none" stroke="#e41e1e" stroke-width="1"/>
<rect x="1072.65" y="339.98" width="5.4" height="14.31" fill="#e01818"/>
<rect x="1074.15" y="341.28" width="2.4" height="2.86" fill="#f4a0a0"/>
<rect x="1074.15" y="350.13" width="2.4" height="2.86" fill="#f4a0a0"/>
<circle cx="1075.35" cy="347.14" r="1.7" fill="#2a2a2a"/>
<rect x="1096.95" y="339.98" width="5.4" height="14.31" fill="#e01818"/>
<rect x="1098.45" y="341.28" width="2.4" height="2.86" fill="#f4a0a0"/>
<rect x="1098.45" y="350.13" width="2.4" height="2.86" fill="#f4a0a0"/>
<circle cx="1099.65" cy="347.14" r="1.7" fill="#2a2a2a"/>
<rect x="1065.2" y="346.54" width="44.6" height="1.7" fill="#3cb43c"/>
<rect x="1085.07" y="355.18" width="21.87" height="1.3" fill="#d83030"/>
<rect x="1104.8" y="337.6" width="5" height="5" fill="none" stroke="#e41e1e" stroke-width="1"/>
<circle cx="1062.2" cy="329.6" r="4" fill="none" stroke="#3cb43c" stroke-width="0.8"/>
<circle cx="1112.8" cy="337.6" r="4" fill="none" stroke="#3cb43c" stroke-width="0.8"/>
<path d="M1139.3 306 Q1139.3 306 1139.3 306L1190.4 306 Q1190.4 306 1190.4 306L1190.4 362.75 Q1190.4 366.75 1186.41 366.42L1143.29 362.91 Q1139.3 362.59 1139.3 358.59Z" fill="url(#grid)" stroke="#1d1d1d" stroke-width="1.4"/>
<line x1="1165" y1="306" x2="1165" y2="366.75" stroke="#1d1d1d" stroke-width="1.3"/>
<line x1="1139.3" y1="333.3" x2="1190.4" y2="333.3" stroke="#1d1d1d" stroke-width="1.3"/>
<rect x="1149.45" y="312.43" width="5.4" height="14.45" fill="#e01818"/>
<rect x="1150.95" y="313.73" width="2.4" height="2.89" fill="#f4a0a0"/>
<rect x="1150.95" y="322.68" width="2.4" height="2.89" fill="#f4a0a0"/>
<circle cx="1152.15" cy="319.65" r="1.7" fill="#2a2a2a"/>
<rect x="1143.3" y="319.05" width="17.7" height="1.7" fill="#3cb43c"/>
<rect x="1151.07" y="327.8" width="9.77" height="1.3" fill="#d83030"/>
<rect x="1156" y="310" width="5" height="5" fill="none" stroke="#e41e1e" stroke-width="1"/>
<rect x="1149.45" y="342.52" width="5.4" height="15" fill="#e01818"/>
<rect x="1150.95" y="343.82" width="2.4" height="3" fill="#f4a0a0"/>
<rect x="1150.95" y="353.22" width="2.4" height="3" fill="#f4a0a0"/>
<circle cx="1152.15" cy="350.02" r="1.7" fill="#2a2a2a"/>
<rect x="1143.3" y="349.42" width="17.7" height="1.7" fill="#3cb43c"/>
<rect x="1151.07" y="361.25" width="9.77" height="1.3" fill="#d83030"/>
<rect x="1156" y="337.3" width="5" height="5" fill="none" stroke="#e41e1e" stroke-width="1"/>
<rect x="1175" y="312.43" width="5.4" height="14.45" fill="#e01818"/>
<rect x="1176.5" y="313.73" width="2.4" height="2.89" fill="#f4a0a0"/>
<rect x="1176.5" y="322.68" width="2.4" height="2.89" fill="#f4a0a0"/>
<circle cx="1177.7" cy="319.65" r="1.7" fill="#2a2a2a"/>
<rect x="1169" y="319.05" width="17.4" height="1.7" fill="#3cb43c"/>
<rect x="1176.63" y="327.8" width="9.63" height="1.3" fill="#d83030"/>
<rect x="1181.4" y="310" width="5" height="5" fill="none" stroke="#e41e1e" stroke-width="1"/>
<rect x="1175" y="342.52" width="5.4" height="15" fill="#e01818"/>
<rect x="1176.5" y="343.82" width="2.4" height="3" fill="#f4a0a0"/>
<rect x="1176.5" y="353.22" width="2.4" height="3" fill="#f4a0a0"/>
<circle cx="1177.7" cy="350.02" r="1.7" fill="#2a2a2a"/>
<rect x="1169" y="349.42" width="17.4" height="1.7" fill="#3cb43c"/>
<rect x="1176.63" y="361.25" width="9.63" height="1.3" fill="#d83030"/>
<rect x="1181.4" y="337.3" width="5" height="5" fill="none" stroke="#e41e1e" stroke-width="1"/>
<circle cx="1140.3" cy="329.3" r="4" fill="none" stroke="#3cb43c" stroke-width="0.8"/>
<circle cx="1189.4" cy="337.3" r="4" fill="none" stroke="#3cb43c" stroke-width="0.8"/>
<path d="M679 489.71 Q679 485.71 682.99 486.03L727.61 489.59 Q731.6 489.91 731.6 493.91L731.6 547.5 Q731.6 547.5 731.6 547.5L679 547.5 Q679 547.5 679 547.5Z" fill="url(#grid)" stroke="#1d1d1d" stroke-width="1.4"/>
<line x1="679" y1="515" x2="731.6" y2="515" stroke="#1d1d1d" stroke-width="1.3"/>
<rect x="690.45" y="492.86" width="5.4" height="15" fill="#e01818"/>
<rect x="691.95" y="494.16" width="2.4" height="3" fill="#f4a0a0"/>
<rect x="691.95" y="503.56" width="2.4" height="3" fill="#f4a0a0"/>
<circle cx="693.15" cy="500.36" r="1.7" fill="#2a2a2a"/>
<rect x="714.75" y="492.86" width="5.4" height="15" fill="#e01818"/>
<rect x="716.25" y="494.16" width="2.4" height="3" fill="#f4a0a0"/>
<rect x="716.25" y="503.56" width="2.4" height="3" fill="#f4a0a0"/>
<circle cx="717.45" cy="500.36" r="1.7" fill="#2a2a2a"/>
<rect x="683" y="499.76" width="44.6" height="1.7" fill="#3cb43c"/>
<rect x="702.87" y="509.5" width="21.87" height="1.3" fill="#d83030"/>
<rect x="722.6" y="489.71" width="5" height="5" fill="none" stroke="#e41e1e" stroke-width="1"/>
<rect x="690.45" y="523.75" width="5.4" height="15" fill="#e01818"/>
<rect x="691.95" y="525.05" width="2.4" height="3" fill="#f4a0a0"/>
<rect x="691.95" y="534.45" width="2.4" height="3" fill="#f4a0a0"/>
<circle cx="693.15" cy="531.25" r="1.7" fill="#2a2a2a"/>
<rect x="714.75" y="523.75" width="5.4" height="15" fill="#e01818"/>
<rect x="716.25" y="525.05" width="2.4" height="3" fill="#f4a0a0"/>
<rect x="716.25" y="534.45" width="2.4" height="3" fill="#f4a0a0"/>
<circle cx="717.45" cy="531.25" r="1.7" fill="#2a2a2a"/>
<rect x="683" y="530.65" width="44.6" height="1.7" fill="#3cb43c"/>
<rect x="702.87" y="542" width="21.87" height="1.3" fill="#d83030"/>
<rect x="722.6" y="519" width="5" height="5" fill="none" stroke="#e41e1e" stroke-width="1"/>
<circle cx="680" cy="511" r="4" fill="none" stroke="#3cb43c" stroke-width="0.8"/>
<circle cx="730.6" cy="519" r="4" fill="none" stroke="#3cb43c" stroke-width="0.8"/>
<path d="M755.7 495.5 Q755.7 491.5 759.69 491.77L804.31 494.73 Q808.3 494.99 808.3 498.99L808.3 547.5 Q808.3 547.5 808.3 547.5L755.7 547.5 Q755.7 547.5 755.7 547.5Z" fill="url(#grid)" stroke="#1d1d1d" stroke-width="1.4"/>
<line x1="782" y1="491.5" x2="782" y2="547.5" stroke="#1d1d1d" stroke-width="1.3"/>
<line x1="755.7" y1="521" x2="808.3" y2="521" stroke="#1d1d1d" stroke-width="1.3"/>
<rect x="766.15" y="498.75" width="5.4" height="15" fill="#e01818"/>
<rect x="767.65" y="500.05" width="2.4" height="3" fill="#f4a0a0"/>
<rect x="767.65" y="509.45" width="2.4" height="3" fill="#f4a0a0"/>
<circle cx="768.85" cy="506.25" r="1.7" fill="#2a2a2a"/>
<rect x="759.7" y="505.65" width="18.3" height="1.7" fill="#3cb43c"/>
<rect x="767.74" y="515.5" width="10.03" height="1.3" fill="#d83030"/>
<rect x="773" y="495.5" width="5" height="5" fill="none" stroke="#e41e1e" stroke-width="1"/>
<rect x="766.15" y="527.27" width="5.4" height="13.95" fill="#e01818"/>
<rect x="767.65" y="528.57" width="2.4" height="2.79" fill="#f4a0a0"/>
<rect x="767.65" y="537.14" width="2.4" height="2.79" fill="#f4a0a0"/>
<circle cx="768.85" cy="534.25" r="1.7" fill="#2a2a2a"/>
<rect x="759.7" y="533.65" width="18.3" height="1.7" fill="#3cb43c"/>
<rect x="767.74" y="542" width="10.03" height="1.3" fill="#d83030"/>
<rect x="773" y="525" width="5" height="5" fill="none" stroke="#e41e1e" stroke-width="1"/>
<rect x="792.45" y="498.75" width="5.4" height="15" fill="#e01818"/>
<rect x="793.95" y="500.05" width="2.4" height="3" fill="#f4a0a0"/>
<rect x="793.95" y="509.45" width="2.4" height="3" fill="#f4a0a0"/>
<circle cx="795.15" cy="506.25" r="1.7" fill="#2a2a2a"/>
<rect x="786" y="505.65" width="18.3" height="1.7" fill="#3cb43c"/>
<rect x="794.03" y="515.5" width="10.03" height="1.3" fill="#d83030"/>
<rect x="799.3" y="495.5" width="5" height="5" fill="none" stroke="#e41e1e" stroke-width="1"/>
<rect x="792.45" y="527.27" width="5.4" height="13.95" fill="#e01818"/>
<rect x="793.95" y="528.57" width="2.4" height="2.79" fill="#f4a0a0"/>
<rect x="793.95" y="537.14" width="2.4" height="2.79" fill="#f4a0a0"/>
<circle cx="795.15" cy="534.25" r="1.7" fill="#2a2a2a"/>
<rect x="786" y="533.65" width="18.3" height="1.7" fill="#3cb43c"/>
<rect x="794.03" y="542" width="10.03" height="1.3" fill="#d83030"/>
<rect x="799.3" y="525" width="5" height="5" fill="none" stroke="#e41e1e" stroke-width="1"/>
<circle cx="756.7" cy="517" r="4" fill="none" stroke="#3cb43c" stroke-width="0.8"/>
<circle cx="807.3" cy="525" r="4" fill="none" stroke="#3cb43c" stroke-width="0.8"/>
<path d="M832.4 500.91 Q832.4 496.91 836.38 497.27L879.62 501.17 Q883.6 501.53 883.6 505.53L883.6 547.5 Q883.6 547.5 883.6 547.5L832.4 547.5 Q832.4 547.5 832.4 547.5Z" fill="url(#grid)" stroke="#1d1d1d" stroke-width="1.4"/>
<line x1="858" y1="496.91" x2="858" y2="547.5" stroke="#1d1d1d" stroke-width="1.3"/>
<line x1="832.4" y1="521" x2="883.6" y2="521" stroke="#1d1d1d" stroke-width="1.3"/>
<rect x="842.5" y="502.73" width="5.4" height="12.46" fill="#e01818"/>
<rect x="844" y="504.03" width="2.4" height="2.49" fill="#f4a0a0"/>
<rect x="844" y="511.39" width="2.4" height="2.49" fill="#f4a0a0"/>
<circle cx="845.2" cy="508.95" r="1.7" fill="#2a2a2a"/>
<rect x="836.4" y="508.35" width="17.6" height="1.7" fill="#3cb43c"/>
<rect x="844.12" y="515.5" width="9.72" height="1.3" fill="#d83030"/>
<rect x="849" y="500.91" width="5" height="5" fill="none" stroke="#e41e1e" stroke-width="1"/>
<rect x="842.5" y="527.27" width="5.4" height="13.95" fill="#e01818"/>
<rect x="844" y="528.57" width="2.4" height="2.79" fill="#f4a0a0"/>
<rect x="844" y="537.14" width="2.4" height="2.79" fill="#f4a0a0"/>
<circle cx="845.2" cy="534.25" r="1.7" fill="#2a2a2a"/>
<rect x="836.4" y="533.65" width="17.6" height="1.7" fill="#3cb43c"/>
<rect x="844.12" y="542" width="9.72" height="1.3" fill="#d83030"/>
<rect x="849" y="525" width="5" height="5" fill="none" stroke="#e41e1e" stroke-width="1"/>
<rect x="868.1" y="502.73" width="5.4" height="12.46" fill="#e01818"/>
<rect x="869.6" y="504.03" width="2.4" height="2.49" fill="#f4a0a0"/>
<rect x="869.6" y="511.39" width="2.4" height="2.49" fill="#f4a0a0"/>
<circle cx="870.8" cy="508.95" r="1.7" fill="#2a2a2a"/>
<rect x="862" y="508.35" width="17.6" height="1.7" fill="#3cb43c"/>
<rect x="869.72" y="515.5" width="9.72" height="1.3" fill="#d83030"/>
<rect x="874.6" y="500.91" width="5" height="5" fill="none" stroke="#e41e1e" stroke-width="1"/>
<rect x="868.1" y="527.27" width="5.4" height="13.95" fill="#e01818"/>
<rect x="869.6" y="528.57" width="2.4" height="2.79" fill="#f4a0a0"/>
<rect x="869.6" y="537.14" width="2.4" height="2.79" fill="#f4a0a0"/>
<circle cx="870.8" cy="534.25" r="1.7" fill="#2a2a2a"/>
<rect x="862" y="533.65" width="17.6" height="1.7" fill="#3cb43c"/>
<rect x="869.72" y="542" width="9.72" height="1.3" fill="#d83030"/>
<rect x="874.6" y="525" width="5" height="5" fill="none" stroke="#e41e1e" stroke-width="1"/>
<circle cx="833.4" cy="517" r="4" fill="none" stroke="#3cb43c" stroke-width="0.8"/>
<circle cx="882.6" cy="525" r="4" fill="none" stroke="#3cb43c" stroke-width="0.8"/>
<path d="M985.8 505.54 Q985.8 501.54 989.78 501.18L1033.02 497.28 Q1037 496.92 1037 500.92L1037 547.5 Q1037 547.5 1037 547.5L985.8 547.5 Q985.8 547.5 985.8 547.5Z" fill="url(#grid)" stroke="#1d1d1d" stroke-width="1.4"/>
<line x1="1011.4" y1="496.92" x2="1011.4" y2="547.5" stroke="#1d1d1d" stroke-width="1.3"/>
<line x1="985.8" y1="521" x2="1037" y2="521" stroke="#1d1d1d" stroke-width="1.3"/>
<rect x="995.9" y="502.73" width="5.4" height="12.45" fill="#e01818"/>
<rect x="997.4" y="504.03" width="2.4" height="2.49" fill="#f4a0a0"/>
<rect x="997.4" y="511.39" width="2.4" height="2.49" fill="#f4a0a0"/>
<circle cx="998.6" cy="508.96" r="1.7" fill="#2a2a2a"/>
<rect x="989.8" y="508.36" width="17.6" height="1.7" fill="#3cb43c"/>
<rect x="997.52" y="515.5" width="9.72" height="1.3" fill="#d83030"/>
<rect x="1002.4" y="500.92" width="5" height="5" fill="none" stroke="#e41e1e" stroke-width="1"/>
<rect x="995.9" y="527.27" width="5.4" height="13.95" fill="#e01818"/>
<rect x="997.4" y="528.57" width="2.4" height="2.79" fill="#f4a0a0"/>
<rect x="997.4" y="537.14" width="2.4" height="2.79" fill="#f4a0a0"/>
<circle cx="998.6" cy="534.25" r="1.7" fill="#2a2a2a"/>
<rect x="989.8" y="533.65" width="17.6" height="1.7" fill="#3cb43c"/>
<rect x="997.52" y="542" width="9.72" height="1.3" fill="#d83030"/>
<rect x="1002.4" y="525" width="5" height="5" fill="none" stroke="#e41e1e" stroke-width="1"/>
<rect x="1021.5" y="502.73" width="5.4" height="12.45" fill="#e01818"/>
<rect x="1023" y="504.03" width="2.4" height="2.49" fill="#f4a0a0"/>
<rect x="1023" y="511.39" width="2.4" height="2.49" fill="#f4a0a0"/>
<circle cx="1024.2" cy="508.96" r="1.7" fill="#2a2a2a"/>
<rect x="1015.4" y="508.36" width="17.6" height="1.7" fill="#3cb43c"/>
<rect x="1023.12" y="515.5" width="9.72" height="1.3" fill="#d83030"/>
<rect x="1028" y="500.92" width="5" height="5" fill="none" stroke="#e41e1e" stroke-width="1"/>
<rect x="1021.5" y="527.27" width="5.4" height="13.95" fill="#e01818"/>
<rect x="1023" y="528.57" width="2.4" height="2.79" fill="#f4a0a0"/>
<rect x="1023" y="537.14" width="2.4" height="2.79" fill="#f4a0a0"/>
<circle cx="1024.2" cy="534.25" r="1.7" fill="#2a2a2a"/>
<rect x="1015.4" y="533.65" width="17.6" height="1.7" fill="#3cb43c"/>
<rect x="1023.12" y="542" width="9.72" height="1.3" fill="#d83030"/>
<rect x="1028" y="525" width="5" height="5" fill="none" stroke="#e41e1e" stroke-width="1"/>
<circle cx="986.8" cy="517" r="4" fill="none" stroke="#3cb43c" stroke-width="0.8"/>
<circle cx="1036" cy="525" r="4" fill="none" stroke="#3cb43c" stroke-width="0.8"/>
<path d="M1062.5 498.9 Q1062.5 494.9 1066.49 494.64L1109.71 491.77 Q1113.7 491.51 1113.7 495.51L1113.7 547.5 Q1113.7 547.5 1113.7 547.5L1062.5 547.5 Q1062.5 547.5 1062.5 547.5Z" fill="url(#grid)" stroke="#1d1d1d" stroke-width="1.4"/>
<line x1="1088" y1="491.51" x2="1088" y2="547.5" stroke="#1d1d1d" stroke-width="1.3"/>
<line x1="1062.5" y1="521" x2="1113.7" y2="521" stroke="#1d1d1d" stroke-width="1.3"/>
<rect x="1072.55" y="498.76" width="5.4" height="15" fill="#e01818"/>
<rect x="1074.05" y="500.06" width="2.4" height="3" fill="#f4a0a0"/>
<rect x="1074.05" y="509.46" width="2.4" height="3" fill="#f4a0a0"/>
<circle cx="1075.25" cy="506.26" r="1.7" fill="#2a2a2a"/>
<rect x="1066.5" y="505.66" width="17.5" height="1.7" fill="#3cb43c"/>
<rect x="1074.17" y="515.5" width="9.68" height="1.3" fill="#d83030"/>
<rect x="1079" y="495.51" width="5" height="5" fill="none" stroke="#e41e1e" stroke-width="1"/>
<rect x="1072.55" y="527.27" width="5.4" height="13.95" fill="#e01818"/>
<rect x="1074.05" y="528.57" width="2.4" height="2.79" fill="#f4a0a0"/>
<rect x="1074.05" y="537.14" width="2.4" height="2.79" fill="#f4a0a0"/>
<circle cx="1075.25" cy="534.25" r="1.7" fill="#2a2a2a"/>
<rect x="1066.5" y="533.65" width="17.5" height="1.7" fill="#3cb43c"/>
<rect x="1074.17" y="542" width="9.68" height="1.3" fill="#d83030"/>
<rect x="1079" y="525" width="5" height="5" fill="none" stroke="#e41e1e" stroke-width="1"/>
<rect x="1098.15" y="498.76" width="5.4" height="15" fill="#e01818"/>
<rect x="1099.65" y="500.06" width="2.4" height="3" fill="#f4a0a0"/>
<rect x="1099.65" y="509.46" width="2.4" height="3" fill="#f4a0a0"/>
<circle cx="1100.85" cy="506.26" r="1.7" fill="#2a2a2a"/>
<rect x="1092" y="505.66" width="17.7" height="1.7" fill="#3cb43c"/>
<rect x="1099.77" y="515.5" width="9.77" height="1.3" fill="#d83030"/>
<rect x="1104.7" y="495.51" width="5" height="5" fill="none" stroke="#e41e1e" stroke-width="1"/>
<rect x="1098.15" y="527.27" width="5.4" height="13.95" fill="#e01818"/>
<rect x="1099.65" y="528.57" width="2.4" height="2.79" fill="#f4a0a0"/>
<rect x="1099.65" y="537.14" width="2.4" height="2.79" fill="#f4a0a0"/>
<circle cx="1100.85" cy="534.25" r="1.7" fill="#2a2a2a"/>
<rect x="1092" y="533.65" width="17.7" height="1.7" fill="#3cb43c"/>
<rect x="1099.77" y="542" width="9.77" height="1.3" fill="#d83030"/>
<rect x="1104.7" y="525" width="5" height="5" fill="none" stroke="#e41e1e" stroke-width="1"/>
<circle cx="1063.5" cy="517" r="4" fill="none" stroke="#3cb43c" stroke-width="0.8"/>
<circle cx="1112.7" cy="525" r="4" fill="none" stroke="#3cb43c" stroke-width="0.8"/>
<path d="M1139.3 493.81 Q1139.3 489.81 1143.29 489.49L1186.41 486.04 Q1190.4 485.72 1190.4 489.72L1190.4 547.5 Q1190.4 547.5 1190.4 547.5L1139.3 547.5 Q1139.3 547.5 1139.3 547.5Z" fill="url(#grid)" stroke="#1d1d1d" stroke-width="1.4"/>
<line x1="1139.3" y1="515" x2="1190.4" y2="515" stroke="#1d1d1d" stroke-width="1.3"/>
<rect x="1150.38" y="492.86" width="5.4" height="15" fill="#e01818"/>
<rect x="1151.88" y="494.16" width="2.4" height="3" fill="#f4a0a0"/>
<rect x="1151.88" y="503.56" width="2.4" height="3" fill="#f4a0a0"/>
<circle cx="1153.08" cy="500.36" r="1.7" fill="#2a2a2a"/>
<rect x="1173.92" y="492.86" width="5.4" height="15" fill="#e01818"/>
<rect x="1175.42" y="494.16" width="2.4" height="3" fill="#f4a0a0"/>
<rect x="1175.42" y="503.56" width="2.4" height="3" fill="#f4a0a0"/>
<circle cx="1176.62" cy="500.36" r="1.7" fill="#2a2a2a"/>
<rect x="1143.3" y="499.76" width="43.1" height="1.7" fill="#3cb43c"/>
<rect x="1162.5" y="509.5" width="21.2" height="1.3" fill="#d83030"/>
<rect x="1181.4" y="489.72" width="5" height="5" fill="none" stroke="#e41e1e" stroke-width="1"/>
<rect x="1150.38" y="523.75" width="5.4" height="15" fill="#e01818"/>
<rect x="1151.88" y="525.05" width="2.4" height="3" fill="#f4a0a0"/>
<rect x="1151.88" y="534.45" width="2.4" height="3" fill="#f4a0a0"/>
<circle cx="1153.08" cy="531.25" r="1.7" fill="#2a2a2a"/>
<rect x="1173.92" y="523.75" width="5.4" height="15" fill="#e01818"/>
<rect x="1175.42" y="525.05" width="2.4" height="3" fill="#f4a0a0"/>
<rect x="1175.42" y="534.45" width="2.4" height="3" fill="#f4a0a0"/>
<circle cx="1176.62" cy="531.25" r="1.7" fill="#2a2a2a"/>
<rect x="1143.3" y="530.65" width="43.1" height="1.7" fill="#3cb43c"/>
<rect x="1162.5" y="542" width="21.2" height="1.3" fill="#d83030"/>
<rect x="1181.4" y="519" width="5" height="5" fill="none" stroke="#e41e1e" stroke-width="1"/>
<circle cx="1140.3" cy="511" r="4" fill="none" stroke="#3cb43c" stroke-width="0.8"/>
<circle cx="1189.4" cy="519" r="4" fill="none" stroke="#3cb43c" stroke-width="0.8"/>
<rect x="820.2" y="317.5" width="63.8" height="25.9" fill="#fff" stroke="#555" stroke-width="1"/>
<rect x="822" y="319.5" width="60" height="21.9" fill="url(#grid)" stroke="#777" stroke-width="0.6"/>
<line x1="831" y1="318" x2="831" y2="343" stroke="#e41e1e" stroke-width="0.8"/>
<line x1="841" y1="318" x2="841" y2="343" stroke="#e41e1e" stroke-width="0.8"/>
<line x1="851" y1="318" x2="851" y2="343" stroke="#e41e1e" stroke-width="0.8"/>
<line x1="861" y1="318" x2="861" y2="343" stroke="#e41e1e" stroke-width="0.8"/>
<line x1="871" y1="318" x2="871" y2="343" stroke="#e41e1e" stroke-width="0.8"/>
<line x1="881" y1="318" x2="881" y2="343" stroke="#e41e1e" stroke-width="0.8"/>
<rect x="827" y="322" width="50" height="5" fill="none" stroke="#e41e1e" stroke-width="1.3"/>
<circle cx="829" cy="324.5" r="2.2" fill="#fff" stroke="#e41e1e" stroke-width="1.1"/>
<circle cx="875" cy="324.5" r="2.2" fill="#fff" stroke="#e41e1e" stroke-width="1.1"/>
<rect x="827" y="333" width="50" height="5" fill="none" stroke="#e41e1e" stroke-width="1.3"/>
<circle cx="829" cy="335.5" r="2.2" fill="#fff" stroke="#e41e1e" stroke-width="1.1"/>
<circle cx="875" cy="335.5" r="2.2" fill="#fff" stroke="#e41e1e" stroke-width="1.1"/>
<rect x="836" y="330" width="32" height="1.7" fill="#3cb43c"/>
<rect x="838" y="323.5" width="28" height="1.4" fill="#e41e1e"/>
<path d="M896.4 306V351.41 M935.4 306V336 M973.3 306V351.43 M1012 306V353.99 M808.3 306V357.25" fill="none" stroke="#1d1d1d" stroke-width="1.4"/>
<rect x="903.8" y="314" width="24.6" height="12.7" fill="none" stroke="#e41e1e" stroke-width="1.4"/>
<rect x="904.8" y="320" width="22.6" height="6" fill="#e41e1e" opacity="0.85"/>
<rect x="908.8" y="321.5" width="4" height="3" fill="#fff"/>
<rect x="919.4" y="321.5" width="4" height="3" fill="#fff"/>
<circle cx="906.8" cy="324" r="2.2" fill="#fff" stroke="#e41e1e" stroke-width="1.3"/>
<circle cx="925.4" cy="324" r="2.2" fill="#fff" stroke="#e41e1e" stroke-width="1.3"/>
<circle cx="916.1" cy="317" r="1.8" fill="none" stroke="#e41e1e" stroke-width="1"/>
<rect x="905.8" y="330" width="20.6" height="1.8" fill="#3cb43c"/>
<rect x="899.8" y="335.5" width="20" height="1.2" fill="#e41e1e"/>
<rect x="941.6" y="314" width="25.5" height="12.7" fill="none" stroke="#e41e1e" stroke-width="1.4"/>
<rect x="942.6" y="320" width="23.5" height="6" fill="#e41e1e" opacity="0.85"/>
<rect x="946.6" y="321.5" width="4" height="3" fill="#fff"/>
<rect x="958.1" y="321.5" width="4" height="3" fill="#fff"/>
<circle cx="944.6" cy="324" r="2.2" fill="#fff" stroke="#e41e1e" stroke-width="1.3"/>
<circle cx="964.1" cy="324" r="2.2" fill="#fff" stroke="#e41e1e" stroke-width="1.3"/>
<circle cx="954.35" cy="317" r="1.8" fill="none" stroke="#e41e1e" stroke-width="1"/>
<rect x="943.6" y="330" width="21.5" height="1.8" fill="#3cb43c"/>
<rect x="937.6" y="335.5" width="20" height="1.2" fill="#e41e1e"/>
<rect x="986.5" y="313.5" width="12.3" height="30.8" fill="none" stroke="#444" stroke-width="0.9"/>
<rect x="988" y="316" width="5" height="26" fill="none" stroke="#e41e1e" stroke-width="1.3"/>
<circle cx="990.5" cy="317" r="2.2" fill="#fff" stroke="#e41e1e" stroke-width="1.2"/>
<circle cx="990.5" cy="341" r="2.2" fill="#fff" stroke="#e41e1e" stroke-width="1.2"/>
<rect x="982" y="327.5" width="20" height="1.8" fill="#3cb43c"/>
<rect x="1021.6" y="319.6" width="31.7" height="18.4" fill="none" stroke="#444" stroke-width="0.9"/>
<rect x="1023" y="327" width="29" height="4" fill="none" stroke="#e41e1e" stroke-width="1.2"/>
<circle cx="1026" cy="335" r="2.3" fill="#fff" stroke="#e41e1e" stroke-width="1.3"/>
<circle cx="1049" cy="335" r="2.3" fill="#fff" stroke="#e41e1e" stroke-width="1.3"/>
<circle cx="1037.5" cy="322.5" r="2" fill="none" stroke="#e41e1e" stroke-width="1.1"/>
<rect x="1025" y="328.5" width="25" height="1.6" fill="#333"/>
<rect x="1024" y="347" width="26" height="1.3" fill="#e41e1e"/>
<path d="M915 341 a5 5 0 0 1 5 5" fill="none" stroke="#3cb43c" stroke-width="0.9"/>
<path d="M956 341 a5 5 0 0 1 5 5" fill="none" stroke="#3cb43c" stroke-width="0.9"/>
<path d="M886 344 a5 5 0 0 1 5 5" fill="none" stroke="#3cb43c" stroke-width="0.9"/>
<path d="M984 344 a5 5 0 0 1 5 5" fill="none" stroke="#3cb43c" stroke-width="0.9"/>
<path d="M818 352 a5 5 0 0 1 5 5" fill="none" stroke="#3cb43c" stroke-width="0.9"/>
<path d="M1052 352 a5 5 0 0 1 5 5" fill="none" stroke="#3cb43c" stroke-width="0.9"/>
<rect x="822" y="346" width="6" height="1.1" fill="#e41e1e" opacity="0.8"/>
<rect x="834" y="346" width="6" height="1.1" fill="#e41e1e" opacity="0.8"/>
<rect x="846" y="346" width="6" height="1.1" fill="#e41e1e" opacity="0.8"/>
<rect x="858" y="346" width="6" height="1.1" fill="#e41e1e" opacity="0.8"/>
<rect x="870" y="346" width="6" height="1.1" fill="#e41e1e" opacity="0.8"/>
<rect x="882" y="346" width="6" height="1.1" fill="#e41e1e" opacity="0.8"/>
<path d="M910 350.6 A29.2 29.2 0 0 1 960.6 350.6 Z" fill="url(#dots)" stroke="none"/>
<path d="M906 351 L910 350.6 A29.2 29.2 0 0 1 960.6 350.6 L965 351" fill="none" stroke="#1d1d1d" stroke-width="1.5"/>
<path d="M922 352 Q935 364 948 352" fill="none" stroke="#3cb43c" stroke-width="0.9"/>
<line x1="935.3" y1="350" x2="935.3" y2="365" stroke="#e41e1e" stroke-width="1"/>
<rect x="925" y="367" width="21" height="1.5" fill="#e41e1e"/>
<rect x="927" y="370" width="17" height="1.5" fill="#3cb43c"/>
<path d="M584 375 Q584 375 584 375L627.02 371.49 Q632 371.09 632 376.09L632 476.45 Q632 481.45 627.02 481.05L584 477.6 Q584 477.6 584 477.6Z" fill="url(#grid)" stroke="#1d1d1d" stroke-width="1.4"/>
<line x1="584" y1="400.4" x2="632" y2="400.4" stroke="#1d1d1d" stroke-width="1.3"/>
<line x1="584" y1="452" x2="632" y2="452" stroke="#1d1d1d" stroke-width="1.3"/>
<rect x="584.7" y="401.2" width="46.6" height="50" fill="url(#dots)"/>
<rect x="598" y="407.4" width="21" height="38.4" fill="#fff" stroke="#1d1d1d" stroke-width="1.1"/>
<line x1="603.25" y1="408" x2="603.25" y2="445" stroke="#e41e1e" stroke-width="0.7"/>
<line x1="608.5" y1="408" x2="608.5" y2="445" stroke="#e41e1e" stroke-width="0.7"/>
<line x1="613.75" y1="408" x2="613.75" y2="445" stroke="#e41e1e" stroke-width="0.7"/>
<line x1="598" y1="412.2" x2="619" y2="412.2" stroke="#e41e1e" stroke-width="0.5" opacity="0.6"/>
<line x1="598" y1="417" x2="619" y2="417" stroke="#e41e1e" stroke-width="0.5" opacity="0.6"/>
<line x1="598" y1="421.8" x2="619" y2="421.8" stroke="#e41e1e" stroke-width="0.5" opacity="0.6"/>
<line x1="598" y1="426.6" x2="619" y2="426.6" stroke="#e41e1e" stroke-width="0.5" opacity="0.6"/>
<line x1="598" y1="431.4" x2="619" y2="431.4" stroke="#e41e1e" stroke-width="0.5" opacity="0.6"/>
<line x1="598" y1="436.2" x2="619" y2="436.2" stroke="#e41e1e" stroke-width="0.5" opacity="0.6"/>
<line x1="598" y1="441" x2="619" y2="441" stroke="#e41e1e" stroke-width="0.5" opacity="0.6"/>
<rect x="594.3" y="380.56" width="5.4" height="14.88" fill="#e01818"/>
<rect x="595.8" y="381.86" width="2.4" height="2.98" fill="#f4a0a0"/>
<rect x="595.8" y="391.16" width="2.4" height="2.98" fill="#f4a0a0"/>
<circle cx="597" cy="388" r="1.7" fill="#2a2a2a"/>
<rect x="616.3" y="380.56" width="5.4" height="14.88" fill="#e01818"/>
<rect x="617.8" y="381.86" width="2.4" height="2.98" fill="#f4a0a0"/>
<rect x="617.8" y="391.16" width="2.4" height="2.98" fill="#f4a0a0"/>
<circle cx="619" cy="388" r="1.7" fill="#2a2a2a"/>
<rect x="588" y="387.4" width="40" height="1.7" fill="#3cb43c"/>
<rect x="605.8" y="396.5" width="19.8" height="1.3" fill="#d83030"/>
<rect x="594.3" y="457.5" width="5.4" height="15" fill="#e01818"/>
<rect x="595.8" y="458.8" width="2.4" height="3" fill="#f4a0a0"/>
<rect x="595.8" y="468.2" width="2.4" height="3" fill="#f4a0a0"/>
<circle cx="597" cy="465" r="1.7" fill="#2a2a2a"/>
<rect x="616.3" y="457.5" width="5.4" height="15" fill="#e01818"/>
<rect x="617.8" y="458.8" width="2.4" height="3" fill="#f4a0a0"/>
<rect x="617.8" y="468.2" width="2.4" height="3" fill="#f4a0a0"/>
<circle cx="619" cy="465" r="1.7" fill="#2a2a2a"/>
<rect x="588" y="464.4" width="40" height="1.7" fill="#3cb43c"/>
<rect x="605.8" y="474.5" width="19.8" height="1.3" fill="#d83030"/>
<rect x="610" y="413" width="5" height="5" fill="none" stroke="#e41e1e" stroke-width="1.1"/>
<rect x="610" y="435" width="5" height="5" fill="none" stroke="#e41e1e" stroke-width="1.1"/>
<rect x="601" y="426" width="4" height="4" fill="none" stroke="#333" stroke-width="1"/>
<rect x="606" y="427" width="14" height="1.8" fill="#3cb43c"/>
<circle cx="629" cy="408" r="4.5" fill="none" stroke="#3cb43c" stroke-width="0.9"/>
<circle cx="629" cy="445" r="4.5" fill="none" stroke="#3cb43c" stroke-width="0.9"/>
<rect x="596" y="404" width="26" height="1.3" fill="#e41e1e"/>
<path d="M1238.6 376.18 Q1238.6 371.18 1243.58 371.58L1285.5 375 Q1285.5 375 1285.5 375L1285.5 477.6 Q1285.5 477.6 1285.5 477.6L1243.58 480.96 Q1238.6 481.36 1238.6 476.36Z" fill="url(#grid)" stroke="#1d1d1d" stroke-width="1.4"/>
<line x1="1238.6" y1="400.4" x2="1285.5" y2="400.4" stroke="#1d1d1d" stroke-width="1.3"/>
<line x1="1238.6" y1="452" x2="1285.5" y2="452" stroke="#1d1d1d" stroke-width="1.3"/>
<rect x="1239.3" y="401.2" width="45.5" height="50" fill="url(#dots)"/>
<rect x="1250" y="407.4" width="21" height="38.4" fill="#fff" stroke="#1d1d1d" stroke-width="1.1"/>
<line x1="1255.25" y1="408" x2="1255.25" y2="445" stroke="#e41e1e" stroke-width="0.7"/>
<line x1="1260.5" y1="408" x2="1260.5" y2="445" stroke="#e41e1e" stroke-width="0.7"/>
<line x1="1265.75" y1="408" x2="1265.75" y2="445" stroke="#e41e1e" stroke-width="0.7"/>
<line x1="1250" y1="412.2" x2="1271" y2="412.2" stroke="#e41e1e" stroke-width="0.5" opacity="0.6"/>
<line x1="1250" y1="417" x2="1271" y2="417" stroke="#e41e1e" stroke-width="0.5" opacity="0.6"/>
<line x1="1250" y1="421.8" x2="1271" y2="421.8" stroke="#e41e1e" stroke-width="0.5" opacity="0.6"/>
<line x1="1250" y1="426.6" x2="1271" y2="426.6" stroke="#e41e1e" stroke-width="0.5" opacity="0.6"/>
<line x1="1250" y1="431.4" x2="1271" y2="431.4" stroke="#e41e1e" stroke-width="0.5" opacity="0.6"/>
<line x1="1250" y1="436.2" x2="1271" y2="436.2" stroke="#e41e1e" stroke-width="0.5" opacity="0.6"/>
<line x1="1250" y1="441" x2="1271" y2="441" stroke="#e41e1e" stroke-width="0.5" opacity="0.6"/>
<rect x="1248.62" y="380.56" width="5.4" height="14.88" fill="#e01818"/>
<rect x="1250.12" y="381.86" width="2.4" height="2.98" fill="#f4a0a0"/>
<rect x="1250.12" y="391.16" width="2.4" height="2.98" fill="#f4a0a0"/>
<circle cx="1251.32" cy="388" r="1.7" fill="#2a2a2a"/>
<rect x="1270.08" y="380.56" width="5.4" height="14.88" fill="#e01818"/>
<rect x="1271.58" y="381.86" width="2.4" height="2.98" fill="#f4a0a0"/>
<rect x="1271.58" y="391.16" width="2.4" height="2.98" fill="#f4a0a0"/>
<circle cx="1272.78" cy="388" r="1.7" fill="#2a2a2a"/>
<rect x="1242.6" y="387.4" width="38.9" height="1.7" fill="#3cb43c"/>
<rect x="1259.9" y="396.5" width="19.31" height="1.3" fill="#d83030"/>
<rect x="1248.62" y="457.5" width="5.4" height="15" fill="#e01818"/>
<rect x="1250.12" y="458.8" width="2.4" height="3" fill="#f4a0a0"/>
<rect x="1250.12" y="468.2" width="2.4" height="3" fill="#f4a0a0"/>
<circle cx="1251.32" cy="465" r="1.7" fill="#2a2a2a"/>
<rect x="1270.08" y="457.5" width="5.4" height="15" fill="#e01818"/>
<rect x="1271.58" y="458.8" width="2.4" height="3" fill="#f4a0a0"/>
<rect x="1271.58" y="468.2" width="2.4" height="3" fill="#f4a0a0"/>
<circle cx="1272.78" cy="465" r="1.7" fill="#2a2a2a"/>
<rect x="1242.6" y="464.4" width="38.9" height="1.7" fill="#3cb43c"/>
<rect x="1259.9" y="474.5" width="19.31" height="1.3" fill="#d83030"/>
<rect x="1262" y="413" width="5" height="5" fill="none" stroke="#e41e1e" stroke-width="1.1"/>
<rect x="1262" y="435" width="5" height="5" fill="none" stroke="#e41e1e" stroke-width="1.1"/>
<rect x="1253" y="426" width="4" height="4" fill="none" stroke="#333" stroke-width="1"/>
<rect x="1258" y="427" width="14" height="1.8" fill="#3cb43c"/>
<circle cx="1241.6" cy="408" r="4.5" fill="none" stroke="#3cb43c" stroke-width="0.9"/>
<circle cx="1241.6" cy="445" r="4.5" fill="none" stroke="#3cb43c" stroke-width="0.9"/>
<rect x="1250.6" y="404" width="26" height="1.3" fill="#e41e1e"/>
<rect x="647" y="384.7" width="169" height="83.3" rx="7" fill="none" stroke="#8c7e70" stroke-width="1"/>
<rect x="655" y="392" width="123.2" height="68.6" fill="url(#grid2)" stroke="#3b5a2a" stroke-width="1.3"/>
<line x1="666.5" y1="393" x2="666.5" y2="460" stroke="#e41a1a" stroke-width="1.3"/>
<line x1="679.4" y1="393" x2="679.4" y2="460" stroke="#e41a1a" stroke-width="1.3"/>
<line x1="692.3" y1="393" x2="692.3" y2="460" stroke="#e41a1a" stroke-width="1.3"/>
<line x1="705.2" y1="393" x2="705.2" y2="460" stroke="#e41a1a" stroke-width="1.3"/>
<line x1="718.1" y1="393" x2="718.1" y2="460" stroke="#e41a1a" stroke-width="1.3"/>
<line x1="731" y1="393" x2="731" y2="460" stroke="#e41a1a" stroke-width="1.3"/>
<line x1="743.9" y1="393" x2="743.9" y2="460" stroke="#e41a1a" stroke-width="1.3"/>
<line x1="756.8" y1="393" x2="756.8" y2="460" stroke="#e41a1a" stroke-width="1.3"/>
<line x1="769.7" y1="393" x2="769.7" y2="460" stroke="#e41a1a" stroke-width="1.3"/>
<rect x="670.4" y="406.4" width="5.2" height="5.2" fill="none" stroke="#e41e1e" stroke-width="1.3"/>
<rect x="695.9" y="406.4" width="5.2" height="5.2" fill="none" stroke="#e41e1e" stroke-width="1.3"/>
<rect x="721.4" y="406.4" width="5.2" height="5.2" fill="none" stroke="#e41e1e" stroke-width="1.3"/>
<rect x="746.9" y="406.4" width="5.2" height="5.2" fill="none" stroke="#e41e1e" stroke-width="1.3"/>
<rect x="670.4" y="424.4" width="5.2" height="5.2" fill="none" stroke="#e41e1e" stroke-width="1.3"/>
<rect x="695.9" y="424.4" width="5.2" height="5.2" fill="none" stroke="#e41e1e" stroke-width="1.3"/>
<rect x="721.4" y="424.4" width="5.2" height="5.2" fill="none" stroke="#e41e1e" stroke-width="1.3"/>
<rect x="746.9" y="424.4" width="5.2" height="5.2" fill="none" stroke="#e41e1e" stroke-width="1.3"/>
<rect x="670.4" y="441.4" width="5.2" height="5.2" fill="none" stroke="#e41e1e" stroke-width="1.3"/>
<rect x="695.9" y="441.4" width="5.2" height="5.2" fill="none" stroke="#e41e1e" stroke-width="1.3"/>
<rect x="721.4" y="441.4" width="5.2" height="5.2" fill="none" stroke="#e41e1e" stroke-width="1.3"/>
<rect x="746.9" y="441.4" width="5.2" height="5.2" fill="none" stroke="#e41e1e" stroke-width="1.3"/>
<rect x="693" y="428" width="40" height="1.6" fill="#3cb43c"/>
<rect x="670" y="396" width="30" height="1.4" fill="#e41e1e"/>
<path d="M778.2 380 Q778.2 376 782.2 376L812 376 Q816 376 816 380L816 472 Q816 476 812 476L782.2 476 Q778.2 476 778.2 472Z" fill="none" stroke="none"/>
<rect x="778.2" y="393" width="37.8" height="67.7" rx="5" fill="url(#grid)" stroke="#1d1d1d" stroke-width="1.3"/>
<line x1="778.2" y1="427" x2="816" y2="427" stroke="#1d1d1d" stroke-width="1.2"/>
<rect x="794.4" y="402.5" width="5.4" height="15" fill="#e01818"/>
<rect x="795.9" y="403.8" width="2.4" height="3" fill="#f4a0a0"/>
<rect x="795.9" y="413.2" width="2.4" height="3" fill="#f4a0a0"/>
<circle cx="797.1" cy="410" r="1.7" fill="#2a2a2a"/>
<rect x="784.2" y="409.4" width="25.8" height="1.7" fill="#3cb43c"/>
<rect x="795.61" y="421.5" width="13.41" height="1.3" fill="#d83030"/>
<rect x="794.4" y="436" width="5.4" height="15" fill="#e01818"/>
<rect x="795.9" y="437.3" width="2.4" height="3" fill="#f4a0a0"/>
<rect x="795.9" y="446.7" width="2.4" height="3" fill="#f4a0a0"/>
<circle cx="797.1" cy="443.5" r="1.7" fill="#2a2a2a"/>
<rect x="784.2" y="442.9" width="25.8" height="1.7" fill="#3cb43c"/>
<rect x="795.61" y="454.5" width="13.41" height="1.3" fill="#d83030"/>
<rect x="1053.5" y="384.7" width="169" height="83.3" rx="7" fill="none" stroke="#8c7e70" stroke-width="1"/>
<rect x="1091.3" y="392" width="123.2" height="68.6" fill="url(#grid2)" stroke="#3b5a2a" stroke-width="1.3"/>
<line x1="1102.8" y1="393" x2="1102.8" y2="460" stroke="#e41a1a" stroke-width="1.3"/>
<line x1="1115.7" y1="393" x2="1115.7" y2="460" stroke="#e41a1a" stroke-width="1.3"/>
<line x1="1128.6" y1="393" x2="1128.6" y2="460" stroke="#e41a1a" stroke-width="1.3"/>
<line x1="1141.5" y1="393" x2="1141.5" y2="460" stroke="#e41a1a" stroke-width="1.3"/>
<line x1="1154.4" y1="393" x2="1154.4" y2="460" stroke="#e41a1a" stroke-width="1.3"/>
<line x1="1167.3" y1="393" x2="1167.3" y2="460" stroke="#e41a1a" stroke-width="1.3"/>
<line x1="1180.2" y1="393" x2="1180.2" y2="460" stroke="#e41a1a" stroke-width="1.3"/>
<line x1="1193.1" y1="393" x2="1193.1" y2="460" stroke="#e41a1a" stroke-width="1.3"/>
<line x1="1206" y1="393" x2="1206" y2="460" stroke="#e41a1a" stroke-width="1.3"/>
<rect x="1193.9" y="406.4" width="5.2" height="5.2" fill="none" stroke="#e41e1e" stroke-width="1.3"/>
<rect x="1168.4" y="406.4" width="5.2" height="5.2" fill="none" stroke="#e41e1e" stroke-width="1.3"/>
<rect x="1142.9" y="406.4" width="5.2" height="5.2" fill="none" stroke="#e41e1e" stroke-width="1.3"/>
<rect x="1117.4" y="406.4" width="5.2" height="5.2" fill="none" stroke="#e41e1e" stroke-width="1.3"/>
<rect x="1193.9" y="424.4" width="5.2" height="5.2" fill="none" stroke="#e41e1e" stroke-width="1.3"/>
<rect x="1168.4" y="424.4" width="5.2" height="5.2" fill="none" stroke="#e41e1e" stroke-width="1.3"/>
<rect x="1142.9" y="424.4" width="5.2" height="5.2" fill="none" stroke="#e41e1e" stroke-width="1.3"/>
<rect x="1117.4" y="424.4" width="5.2" height="5.2" fill="none" stroke="#e41e1e" stroke-width="1.3"/>
<rect x="1193.9" y="441.4" width="5.2" height="5.2" fill="none" stroke="#e41e1e" stroke-width="1.3"/>
<rect x="1168.4" y="441.4" width="5.2" height="5.2" fill="none" stroke="#e41e1e" stroke-width="1.3"/>
<rect x="1142.9" y="441.4" width="5.2" height="5.2" fill="none" stroke="#e41e1e" stroke-width="1.3"/>
<rect x="1117.4" y="441.4" width="5.2" height="5.2" fill="none" stroke="#e41e1e" stroke-width="1.3"/>
<rect x="1129.3" y="428" width="40" height="1.6" fill="#3cb43c"/>
<rect x="1106.3" y="396" width="30" height="1.4" fill="#e41e1e"/>
<path d="M1053.5 380 Q1053.5 376 1057.5 376L1087.3 376 Q1091.3 376 1091.3 380L1091.3 472 Q1091.3 476 1087.3 476L1057.5 476 Q1053.5 476 1053.5 472Z" fill="none" stroke="none"/>
<rect x="1053.5" y="393" width="37.8" height="67.7" rx="5" fill="url(#grid)" stroke="#1d1d1d" stroke-width="1.3"/>
<line x1="1053.5" y1="427" x2="1091.3" y2="427" stroke="#1d1d1d" stroke-width="1.2"/>
<rect x="1069.7" y="402.5" width="5.4" height="15" fill="#e01818"/>
<rect x="1071.2" y="403.8" width="2.4" height="3" fill="#f4a0a0"/>
<rect x="1071.2" y="413.2" width="2.4" height="3" fill="#f4a0a0"/>
<circle cx="1072.4" cy="410" r="1.7" fill="#2a2a2a"/>
<rect x="1059.5" y="409.4" width="25.8" height="1.7" fill="#3cb43c"/>
<rect x="1070.91" y="421.5" width="13.41" height="1.3" fill="#d83030"/>
<rect x="1069.7" y="436" width="5.4" height="15" fill="#e01818"/>
<rect x="1071.2" y="437.3" width="2.4" height="3" fill="#f4a0a0"/>
<rect x="1071.2" y="446.7" width="2.4" height="3" fill="#f4a0a0"/>
<circle cx="1072.4" cy="443.5" r="1.7" fill="#2a2a2a"/>
<rect x="1059.5" y="442.9" width="25.8" height="1.7" fill="#3cb43c"/>
<rect x="1070.91" y="454.5" width="13.41" height="1.3" fill="#d83030"/>
<path d="M816.8 386.4 Q816.8 377.4 825.78 378.06L911.32 384.34 Q920.3 385 920.3 394L920.3 458 Q920.3 467 911.33 467.78L825.77 475.22 Q816.8 476 816.8 467Z" fill="url(#dots)" stroke="#1d1d1d" stroke-width="2.2"/>
<rect x="822.4" y="385.5" width="22.3" height="20.5" fill="#fff" stroke="#1d1d1d" stroke-width="1.8"/>
<rect x="822.4" y="406" width="22.3" height="27.7" fill="#fff" stroke="#1d1d1d" stroke-width="1.8"/>
<line x1="825" y1="408.5" x2="832" y2="408.5" stroke="#3cb43c" stroke-width="0.7"/>
<line x1="835" y1="408.5" x2="842" y2="408.5" stroke="#3cb43c" stroke-width="0.7"/>
<line x1="825" y1="410.5" x2="832" y2="410.5" stroke="#3cb43c" stroke-width="0.7"/>
<line x1="835" y1="410.5" x2="842" y2="410.5" stroke="#3cb43c" stroke-width="0.7"/>
<line x1="825" y1="412.5" x2="832" y2="412.5" stroke="#3cb43c" stroke-width="0.7"/>
<line x1="835" y1="412.5" x2="842" y2="412.5" stroke="#3cb43c" stroke-width="0.7"/>
<line x1="825" y1="414.5" x2="832" y2="414.5" stroke="#3cb43c" stroke-width="0.7"/>
<line x1="835" y1="414.5" x2="842" y2="414.5" stroke="#3cb43c" stroke-width="0.7"/>
<line x1="825" y1="416.5" x2="832" y2="416.5" stroke="#3cb43c" stroke-width="0.7"/>
<line x1="835" y1="416.5" x2="842" y2="416.5" stroke="#3cb43c" stroke-width="0.7"/>
<line x1="825" y1="418.5" x2="832" y2="418.5" stroke="#3cb43c" stroke-width="0.7"/>
<line x1="835" y1="418.5" x2="842" y2="418.5" stroke="#3cb43c" stroke-width="0.7"/>
<line x1="825" y1="420.5" x2="832" y2="420.5" stroke="#3cb43c" stroke-width="0.7"/>
<line x1="835" y1="420.5" x2="842" y2="420.5" stroke="#3cb43c" stroke-width="0.7"/>
<line x1="825" y1="422.5" x2="832" y2="422.5" stroke="#3cb43c" stroke-width="0.7"/>
<line x1="835" y1="422.5" x2="842" y2="422.5" stroke="#3cb43c" stroke-width="0.7"/>
<line x1="825" y1="424.5" x2="832" y2="424.5" stroke="#3cb43c" stroke-width="0.7"/>
<line x1="835" y1="424.5" x2="842" y2="424.5" stroke="#3cb43c" stroke-width="0.7"/>
<line x1="825" y1="426.5" x2="832" y2="426.5" stroke="#3cb43c" stroke-width="0.7"/>
<line x1="835" y1="426.5" x2="842" y2="426.5" stroke="#3cb43c" stroke-width="0.7"/>
<line x1="825" y1="428.5" x2="832" y2="428.5" stroke="#3cb43c" stroke-width="0.7"/>
<line x1="835" y1="428.5" x2="842" y2="428.5" stroke="#3cb43c" stroke-width="0.7"/>
<line x1="825" y1="430.5" x2="832" y2="430.5" stroke="#3cb43c" stroke-width="0.7"/>
<line x1="835" y1="430.5" x2="842" y2="430.5" stroke="#3cb43c" stroke-width="0.7"/>
<rect x="844.7" y="385.5" width="26.6" height="26" fill="url(#grid)" stroke="#1d1d1d" stroke-width="1.8"/>
<rect x="844.7" y="411.5" width="43.3" height="22.2" fill="url(#grid)" stroke="#1d1d1d" stroke-width="1.8"/>
<rect x="871.3" y="385.5" width="16.7" height="26" fill="url(#dots)" stroke="#1d1d1d" stroke-width="1.2"/>
<rect x="822.4" y="433.7" width="22.3" height="34.1" fill="#fff" stroke="#1d1d1d" stroke-width="1.8"/>
<rect x="844.7" y="433.7" width="16.7" height="17.3" fill="#fff" stroke="#1d1d1d" stroke-width="1.8"/>
<rect x="861.4" y="433.7" width="24.6" height="34.1" fill="url(#dots)" stroke="#1d1d1d" stroke-width="1.8"/>
<rect x="850" y="455" width="36" height="12.8" fill="#fff" stroke="#1d1d1d" stroke-width="1.5"/>
<rect x="886" y="433.7" width="13.7" height="26.3" fill="url(#dots)" stroke="#1d1d1d" stroke-width="1.2"/>
<rect x="888" y="385.5" width="11.7" height="48.2" fill="#fff" stroke="#1d1d1d" stroke-width="1.5"/>
<path d="M889.5 387L898 432M898 387L889.5 432" stroke="#6a5a40" stroke-width="0.9"/>
<rect x="900.5" y="391.5" width="18.5" height="22.5" fill="#fff" stroke="#4a4030" stroke-width="1.8"/>
<path d="M902.5 393.5L917 412M917 393.5L902.5 412" stroke="#5a4a30" stroke-width="0.9"/>
<rect x="900.5" y="414.5" width="18.5" height="22.5" fill="#fff" stroke="#4a4030" stroke-width="1.8"/>
<path d="M902.5 416.5L917 435M917 416.5L902.5 435" stroke="#5a4a30" stroke-width="0.9"/>
<rect x="900.5" y="440.5" width="18.5" height="22" fill="#fff" stroke="#333" stroke-width="1.5"/>
<rect x="902.5" y="446" width="14.5" height="14" fill="none" stroke="#3cb43c" stroke-width="1"/>
<path d="M902.5 446L917 460M917 446L902.5 460" stroke="#3cb43c" stroke-width="0.8"/>
<rect x="851.4" y="393.4" width="5.2" height="5.2" fill="none" stroke="#e41e1e" stroke-width="1.4"/>
<rect x="863.4" y="388.4" width="5.2" height="5.2" fill="none" stroke="#e41e1e" stroke-width="1.4"/>
<rect x="863.4" y="401.4" width="5.2" height="5.2" fill="none" stroke="#e41e1e" stroke-width="1.4"/>
<rect x="849.4" y="415.4" width="5.2" height="5.2" fill="none" stroke="#e41e1e" stroke-width="1.4"/>
<rect x="863.4" y="415.4" width="5.2" height="5.2" fill="none" stroke="#e41e1e" stroke-width="1.4"/>
<rect x="877.4" y="421.4" width="5.2" height="5.2" fill="none" stroke="#e41e1e" stroke-width="1.4"/>
<rect x="877.4" y="390.4" width="5.2" height="5.2" fill="none" stroke="#e41e1e" stroke-width="1.4"/>
<rect x="877.4" y="401.4" width="5.2" height="5.2" fill="none" stroke="#e41e1e" stroke-width="1.4"/>
<rect x="831.4" y="453.4" width="5.2" height="5.2" fill="none" stroke="#e41e1e" stroke-width="1.4"/>
<rect x="863.4" y="442.4" width="5.2" height="5.2" fill="none" stroke="#e41e1e" stroke-width="1.4"/>
<rect x="890.4" y="443.4" width="5.2" height="5.2" fill="none" stroke="#e41e1e" stroke-width="1.4"/>
<rect x="850.4" y="440.4" width="5.2" height="5.2" fill="none" stroke="#e41e1e" stroke-width="1.4"/>
<rect x="829.4" y="391.4" width="5.2" height="5.2" fill="none" stroke="#e41e1e" stroke-width="1.4"/>
<rect x="848" y="428" width="37" height="1.7" fill="#3cb43c"/>
<rect x="850" y="430.5" width="22.2" height="1.1" fill="#e41e1e"/>
<rect x="826" y="398" width="17" height="1.7" fill="#3cb43c"/>
<rect x="828" y="400.5" width="10.2" height="1.1" fill="#e41e1e"/>
<rect x="864" y="458" width="20" height="1.7" fill="#3cb43c"/>
<rect x="866" y="460.5" width="12" height="1.1" fill="#e41e1e"/>
<rect x="848" y="400" width="22" height="1.7" fill="#3cb43c"/>
<rect x="850" y="402.5" width="13.2" height="1.1" fill="#e41e1e"/>
<line x1="831" y1="436" x2="831" y2="466" stroke="#3cb43c" stroke-width="1.4"/>
<rect x="850.5" y="398" width="3" height="8" fill="#e41e1e" opacity="0.85"/>
<rect x="857.5" y="398" width="3" height="8" fill="#e41e1e" opacity="0.85"/>
<rect x="864.5" y="398" width="3" height="8" fill="#e41e1e" opacity="0.85"/>
<rect x="850.5" y="416" width="3" height="8" fill="#e41e1e" opacity="0.85"/>
<rect x="857.5" y="416" width="3" height="8" fill="#e41e1e" opacity="0.85"/>
<circle cx="829" cy="472" r="4" fill="none" stroke="#3cb43c" stroke-width="0.9"/>
<circle cx="895" cy="382" r="4" fill="none" stroke="#3cb43c" stroke-width="0.9"/>
<circle cx="905" cy="452" r="1.8" fill="#3cb43c"/>
<path d="M949.2 394 Q949.2 385 958.18 384.34L1043.72 378.06 Q1052.7 377.4 1052.7 386.4L1052.7 467 Q1052.7 476 1043.73 475.22L958.17 467.78 Q949.2 467 949.2 458Z" fill="url(#dots)" stroke="#1d1d1d" stroke-width="2.2"/>
<rect x="1024.8" y="385.5" width="22.3" height="20.5" fill="#fff" stroke="#1d1d1d" stroke-width="1.8"/>
<rect x="1024.8" y="406" width="22.3" height="27.7" fill="#fff" stroke="#1d1d1d" stroke-width="1.8"/>
<line x1="1044.5" y1="408.5" x2="1037.5" y2="408.5" stroke="#3cb43c" stroke-width="0.7"/>
<line x1="1034.5" y1="408.5" x2="1027.5" y2="408.5" stroke="#3cb43c" stroke-width="0.7"/>
<line x1="1044.5" y1="410.5" x2="1037.5" y2="410.5" stroke="#3cb43c" stroke-width="0.7"/>
<line x1="1034.5" y1="410.5" x2="1027.5" y2="410.5" stroke="#3cb43c" stroke-width="0.7"/>
<line x1="1044.5" y1="412.5" x2="1037.5" y2="412.5" stroke="#3cb43c" stroke-width="0.7"/>
<line x1="1034.5" y1="412.5" x2="1027.5" y2="412.5" stroke="#3cb43c" stroke-width="0.7"/>
<line x1="1044.5" y1="414.5" x2="1037.5" y2="414.5" stroke="#3cb43c" stroke-width="0.7"/>
<line x1="1034.5" y1="414.5" x2="1027.5" y2="414.5" stroke="#3cb43c" stroke-width="0.7"/>
<line x1="1044.5" y1="416.5" x2="1037.5" y2="416.5" stroke="#3cb43c" stroke-width="0.7"/>
<line x1="1034.5" y1="416.5" x2="1027.5" y2="416.5" stroke="#3cb43c" stroke-width="0.7"/>
<line x1="1044.5" y1="418.5" x2="1037.5" y2="418.5" stroke="#3cb43c" stroke-width="0.7"/>
<line x1="1034.5" y1="418.5" x2="1027.5" y2="418.5" stroke="#3cb43c" stroke-width="0.7"/>
<line x1="1044.5" y1="420.5" x2="1037.5" y2="420.5" stroke="#3cb43c" stroke-width="0.7"/>
<line x1="1034.5" y1="420.5" x2="1027.5" y2="420.5" stroke="#3cb43c" stroke-width="0.7"/>
<line x1="1044.5" y1="422.5" x2="1037.5" y2="422.5" stroke="#3cb43c" stroke-width="0.7"/>
<line x1="1034.5" y1="422.5" x2="1027.5" y2="422.5" stroke="#3cb43c" stroke-width="0.7"/>
<line x1="1044.5" y1="424.5" x2="1037.5" y2="424.5" stroke="#3cb43c" stroke-width="0.7"/>
<line x1="1034.5" y1="424.5" x2="1027.5" y2="424.5" stroke="#3cb43c" stroke-width="0.7"/>
<line x1="1044.5" y1="426.5" x2="1037.5" y2="426.5" stroke="#3cb43c" stroke-width="0.7"/>
<line x1="1034.5" y1="426.5" x2="1027.5" y2="426.5" stroke="#3cb43c" stroke-width="0.7"/>
<line x1="1044.5" y1="428.5" x2="1037.5" y2="428.5" stroke="#3cb43c" stroke-width="0.7"/>
<line x1="1034.5" y1="428.5" x2="1027.5" y2="428.5" stroke="#3cb43c" stroke-width="0.7"/>
<line x1="1044.5" y1="430.5" x2="1037.5" y2="430.5" stroke="#3cb43c" stroke-width="0.7"/>
<line x1="1034.5" y1="430.5" x2="1027.5" y2="430.5" stroke="#3cb43c" stroke-width="0.7"/>
<rect x="998.2" y="385.5" width="26.6" height="26" fill="url(#grid)" stroke="#1d1d1d" stroke-width="1.8"/>
<rect x="981.5" y="411.5" width="43.3" height="22.2" fill="url(#grid)" stroke="#1d1d1d" stroke-width="1.8"/>
<rect x="981.5" y="385.5" width="16.7" height="26" fill="url(#dots)" stroke="#1d1d1d" stroke-width="1.2"/>
<rect x="1024.8" y="433.7" width="22.3" height="34.1" fill="#fff" stroke="#1d1d1d" stroke-width="1.8"/>
<rect x="1008.1" y="433.7" width="16.7" height="17.3" fill="#fff" stroke="#1d1d1d" stroke-width="1.8"/>
<rect x="983.5" y="433.7" width="24.6" height="34.1" fill="url(#dots)" stroke="#1d1d1d" stroke-width="1.8"/>
<rect x="983.5" y="455" width="36" height="12.8" fill="#fff" stroke="#1d1d1d" stroke-width="1.5"/>
<rect x="969.8" y="433.7" width="13.7" height="26.3" fill="url(#dots)" stroke="#1d1d1d" stroke-width="1.2"/>
<rect x="969.8" y="385.5" width="11.7" height="48.2" fill="#fff" stroke="#1d1d1d" stroke-width="1.5"/>
<path d="M971.5 387L980 432M980 387L971.5 432" stroke="#6a5a40" stroke-width="0.9"/>
<rect x="950.5" y="391.5" width="18.5" height="22.5" fill="#fff" stroke="#4a4030" stroke-width="1.8"/>
<path d="M952.5 393.5L967 412M967 393.5L952.5 412" stroke="#5a4a30" stroke-width="0.9"/>
<rect x="950.5" y="414.5" width="18.5" height="22.5" fill="#fff" stroke="#4a4030" stroke-width="1.8"/>
<path d="M952.5 416.5L967 435M967 416.5L952.5 435" stroke="#5a4a30" stroke-width="0.9"/>
<rect x="950.5" y="440.5" width="18.5" height="22" fill="#fff" stroke="#333" stroke-width="1.5"/>
<rect x="952.5" y="446" width="14.5" height="14" fill="none" stroke="#3cb43c" stroke-width="1"/>
<path d="M952.5 446L967 460M967 446L952.5 460" stroke="#3cb43c" stroke-width="0.8"/>
<rect x="1012.9" y="393.4" width="5.2" height="5.2" fill="none" stroke="#e41e1e" stroke-width="1.4"/>
<rect x="1000.9" y="388.4" width="5.2" height="5.2" fill="none" stroke="#e41e1e" stroke-width="1.4"/>
<rect x="1000.9" y="401.4" width="5.2" height="5.2" fill="none" stroke="#e41e1e" stroke-width="1.4"/>
<rect x="1014.9" y="415.4" width="5.2" height="5.2" fill="none" stroke="#e41e1e" stroke-width="1.4"/>
<rect x="1000.9" y="415.4" width="5.2" height="5.2" fill="none" stroke="#e41e1e" stroke-width="1.4"/>
<rect x="986.9" y="421.4" width="5.2" height="5.2" fill="none" stroke="#e41e1e" stroke-width="1.4"/>
<rect x="986.9" y="390.4" width="5.2" height="5.2" fill="none" stroke="#e41e1e" stroke-width="1.4"/>
<rect x="986.9" y="401.4" width="5.2" height="5.2" fill="none" stroke="#e41e1e" stroke-width="1.4"/>
<rect x="1032.9" y="453.4" width="5.2" height="5.2" fill="none" stroke="#e41e1e" stroke-width="1.4"/>
<rect x="1000.9" y="442.4" width="5.2" height="5.2" fill="none" stroke="#e41e1e" stroke-width="1.4"/>
<rect x="973.9" y="443.4" width="5.2" height="5.2" fill="none" stroke="#e41e1e" stroke-width="1.4"/>
<rect x="1013.9" y="440.4" width="5.2" height="5.2" fill="none" stroke="#e41e1e" stroke-width="1.4"/>
<rect x="1034.9" y="391.4" width="5.2" height="5.2" fill="none" stroke="#e41e1e" stroke-width="1.4"/>
<rect x="984.5" y="428" width="37" height="1.7" fill="#3cb43c"/>
<rect x="986.5" y="430.5" width="22.2" height="1.1" fill="#e41e1e"/>
<rect x="1026.5" y="398" width="17" height="1.7" fill="#3cb43c"/>
<rect x="1028.5" y="400.5" width="10.2" height="1.1" fill="#e41e1e"/>
<rect x="985.5" y="458" width="20" height="1.7" fill="#3cb43c"/>
<rect x="987.5" y="460.5" width="12" height="1.1" fill="#e41e1e"/>
<rect x="999.5" y="400" width="22" height="1.7" fill="#3cb43c"/>
<rect x="1001.5" y="402.5" width="13.2" height="1.1" fill="#e41e1e"/>
<line x1="1038.5" y1="436" x2="1038.5" y2="466" stroke="#3cb43c" stroke-width="1.4"/>
<rect x="1016" y="398" width="3" height="8" fill="#e41e1e" opacity="0.85"/>
<rect x="1009" y="398" width="3" height="8" fill="#e41e1e" opacity="0.85"/>
<rect x="1002" y="398" width="3" height="8" fill="#e41e1e" opacity="0.85"/>
<rect x="1016" y="416" width="3" height="8" fill="#e41e1e" opacity="0.85"/>
<rect x="1009" y="416" width="3" height="8" fill="#e41e1e" opacity="0.85"/>
<circle cx="1040.5" cy="472" r="4" fill="none" stroke="#3cb43c" stroke-width="0.9"/>
<circle cx="974.5" cy="382" r="4" fill="none" stroke="#3cb43c" stroke-width="0.9"/>
<circle cx="964.5" cy="452" r="1.8" fill="#3cb43c"/>
<path d="M822 479L902 472L912 478" fill="none" stroke="#3cb43c" stroke-width="0.9" stroke-dasharray="3 2"/>
<circle cx="914" cy="480" r="5" fill="none" stroke="#3cb43c" stroke-width="0.9"/>
<path d="M884.2 547.5V505Q884.2 501 888 501H896.6L935.3 505.3L973.5 501H983Q987 501 987 505V547.5" fill="#fff" stroke="#1d1d1d" stroke-width="1.4"/>
<path d="M896.6 501.5L935.3 505.8L973.5 501.5" fill="none" stroke="#1d1d1d" stroke-width="1.2"/>
<rect x="897" y="507.5" width="76.5" height="5.5" fill="#fff" stroke="#222" stroke-width="1.3"/>
<rect x="899.5" y="509" width="9" height="3" fill="none" stroke="#e41e1e" stroke-width="0.9"/>
<rect x="963" y="509" width="9" height="3" fill="none" stroke="#e41e1e" stroke-width="0.9"/>
<rect x="912" y="509" width="46" height="3" fill="none" stroke="#e41e1e" stroke-width="0.9"/>
<line x1="914" y1="509" x2="914" y2="512" stroke="#e41e1e" stroke-width="0.8"/>
<line x1="917" y1="509" x2="917" y2="512" stroke="#e41e1e" stroke-width="0.8"/>
<line x1="920" y1="509" x2="920" y2="512" stroke="#e41e1e" stroke-width="0.8"/>
<line x1="923" y1="509" x2="923" y2="512" stroke="#e41e1e" stroke-width="0.8"/>
<line x1="926" y1="509" x2="926" y2="512" stroke="#e41e1e" stroke-width="0.8"/>
<line x1="929" y1="509" x2="929" y2="512" stroke="#e41e1e" stroke-width="0.8"/>
<line x1="932" y1="509" x2="932" y2="512" stroke="#e41e1e" stroke-width="0.8"/>
<line x1="935" y1="509" x2="935" y2="512" stroke="#e41e1e" stroke-width="0.8"/>
<line x1="938" y1="509" x2="938" y2="512" stroke="#e41e1e" stroke-width="0.8"/>
<line x1="941" y1="509" x2="941" y2="512" stroke="#e41e1e" stroke-width="0.8"/>
<line x1="944" y1="509" x2="944" y2="512" stroke="#e41e1e" stroke-width="0.8"/>
<line x1="947" y1="509" x2="947" y2="512" stroke="#e41e1e" stroke-width="0.8"/>
<line x1="950" y1="509" x2="950" y2="512" stroke="#e41e1e" stroke-width="0.8"/>
<line x1="953" y1="509" x2="953" y2="512" stroke="#e41e1e" stroke-width="0.8"/>
<line x1="956" y1="509" x2="956" y2="512" stroke="#e41e1e" stroke-width="0.8"/>
<rect x="911.6" y="516.6" width="47.4" height="15.6" rx="1.5" fill="url(#grid)" stroke="#a06a5a" stroke-width="0.9"/>
<circle cx="915.5" cy="525.5" r="2.3" fill="none" stroke="#e41e1e" stroke-width="1.4"/>
<circle cx="935.3" cy="525.5" r="2.3" fill="none" stroke="#e41e1e" stroke-width="1.4"/>
<circle cx="955.5" cy="525.5" r="2.3" fill="none" stroke="#e41e1e" stroke-width="1.4"/>
<rect x="921" y="524.5" width="29" height="1.5" fill="#3cb43c" opacity="0.8"/>
<rect x="927" y="536" width="18" height="1.2" fill="#b03030"/>
<line x1="900" y1="538" x2="972" y2="538" stroke="#3cb43c" stroke-width="0.9"/>
<line x1="900" y1="545" x2="972" y2="545" stroke="#3cb43c" stroke-width="0.9"/>
<rect x="893" y="538" width="7" height="7" fill="none" stroke="#222" stroke-width="1.2"/>
<rect x="970" y="538" width="7" height="7" fill="none" stroke="#222" stroke-width="1.2"/>
<path d="M882.5 500Q882.5 496 886.5 496H984.5Q988.5 496 988.5 500V549.6Q988.5 553.6 984.5 553.6H886.5Q882.5 553.6 882.5 549.6Z" fill="none" stroke="#3cb43c" stroke-width="0.9" stroke-dasharray="3 1.8"/>
<line x1="988.5" y1="553.6" x2="994" y2="559" stroke="#3cb43c" stroke-width="0.8"/>
<circle cx="996.5" cy="563" r="5.5" fill="none" stroke="#3cb43c" stroke-width="0.9"/>
<path d="M922 491V487H935V491" fill="none" stroke="#e41e1e" stroke-width="0.9"/>
<line x1="641.5" y1="371.81" x2="641.5" y2="381.31" stroke="#e41e1e" stroke-width="1.1"/>
<line x1="641.5" y1="471.21" x2="641.5" y2="480.71" stroke="#e41e1e" stroke-width="1.1"/>
<line x1="1228.5" y1="371.85" x2="1228.5" y2="381.35" stroke="#e41e1e" stroke-width="1.1"/>
<line x1="1228.5" y1="471.17" x2="1228.5" y2="480.67" stroke="#e41e1e" stroke-width="1.1"/>
<line x1="654.5" y1="370.75" x2="654.5" y2="380.25" stroke="#e41e1e" stroke-width="1.1"/>
<line x1="654.5" y1="472.25" x2="654.5" y2="481.75" stroke="#e41e1e" stroke-width="1.1"/>
<line x1="1215.5" y1="370.79" x2="1215.5" y2="380.29" stroke="#e41e1e" stroke-width="1.1"/>
<line x1="1215.5" y1="472.21" x2="1215.5" y2="481.71" stroke="#e41e1e" stroke-width="1.1"/>
<line x1="667.5" y1="369.69" x2="667.5" y2="379.19" stroke="#e41e1e" stroke-width="1.1"/>
<line x1="667.5" y1="473.29" x2="667.5" y2="482.79" stroke="#e41e1e" stroke-width="1.1"/>
<line x1="1202.5" y1="369.73" x2="1202.5" y2="379.23" stroke="#e41e1e" stroke-width="1.1"/>
<line x1="1202.5" y1="473.25" x2="1202.5" y2="482.75" stroke="#e41e1e" stroke-width="1.1"/>
<line x1="680.5" y1="368.63" x2="680.5" y2="378.13" stroke="#e41e1e" stroke-width="1.1"/>
<line x1="680.5" y1="474.33" x2="680.5" y2="483.83" stroke="#e41e1e" stroke-width="1.1"/>
<line x1="1189.5" y1="368.68" x2="1189.5" y2="378.18" stroke="#e41e1e" stroke-width="1.1"/>
<line x1="1189.5" y1="474.29" x2="1189.5" y2="483.79" stroke="#e41e1e" stroke-width="1.1"/>
<line x1="692.5" y1="367.66" x2="692.5" y2="377.16" stroke="#e41e1e" stroke-width="1.1"/>
<line x1="692.5" y1="475.29" x2="692.5" y2="484.79" stroke="#e41e1e" stroke-width="1.1"/>
<line x1="1177.5" y1="367.7" x2="1177.5" y2="377.2" stroke="#e41e1e" stroke-width="1.1"/>
<line x1="1177.5" y1="475.25" x2="1177.5" y2="484.75" stroke="#e41e1e" stroke-width="1.1"/>
<line x1="705.5" y1="366.6" x2="705.5" y2="376.1" stroke="#e41e1e" stroke-width="1.1"/>
<line x1="705.5" y1="476.34" x2="705.5" y2="485.84" stroke="#e41e1e" stroke-width="1.1"/>
<line x1="1164.5" y1="366.64" x2="1164.5" y2="376.14" stroke="#e41e1e" stroke-width="1.1"/>
<line x1="1164.5" y1="476.3" x2="1164.5" y2="485.8" stroke="#e41e1e" stroke-width="1.1"/>
<line x1="718.5" y1="365.54" x2="718.5" y2="375.04" stroke="#e41e1e" stroke-width="1.1"/>
<line x1="718.5" y1="477.38" x2="718.5" y2="486.88" stroke="#e41e1e" stroke-width="1.1"/>
<line x1="1151.5" y1="365.58" x2="1151.5" y2="375.08" stroke="#e41e1e" stroke-width="1.1"/>
<line x1="1151.5" y1="477.34" x2="1151.5" y2="486.84" stroke="#e41e1e" stroke-width="1.1"/>
<line x1="731.5" y1="364.49" x2="731.5" y2="373.99" stroke="#e41e1e" stroke-width="1.1"/>
<line x1="731.5" y1="478.4" x2="731.5" y2="487.9" stroke="#e41e1e" stroke-width="1.1"/>
<line x1="1138.5" y1="364.53" x2="1138.5" y2="374.03" stroke="#e41e1e" stroke-width="1.1"/>
<line x1="1138.5" y1="478.37" x2="1138.5" y2="487.87" stroke="#e41e1e" stroke-width="1.1"/>
<line x1="744.5" y1="363.51" x2="744.5" y2="373.01" stroke="#e41e1e" stroke-width="1.1"/>
<line x1="744.5" y1="479.26" x2="744.5" y2="488.76" stroke="#e41e1e" stroke-width="1.1"/>
<line x1="1125.5" y1="363.55" x2="1125.5" y2="373.05" stroke="#e41e1e" stroke-width="1.1"/>
<line x1="1125.5" y1="479.23" x2="1125.5" y2="488.73" stroke="#e41e1e" stroke-width="1.1"/>
<line x1="757.5" y1="362.54" x2="757.5" y2="372.04" stroke="#e41e1e" stroke-width="1.1"/>
<line x1="757.5" y1="480.12" x2="757.5" y2="489.62" stroke="#e41e1e" stroke-width="1.1"/>
<line x1="1112.5" y1="362.58" x2="1112.5" y2="372.08" stroke="#e41e1e" stroke-width="1.1"/>
<line x1="1112.5" y1="480.09" x2="1112.5" y2="489.59" stroke="#e41e1e" stroke-width="1.1"/>
<line x1="770.5" y1="361.57" x2="770.5" y2="371.07" stroke="#e41e1e" stroke-width="1.1"/>
<line x1="770.5" y1="480.98" x2="770.5" y2="490.48" stroke="#e41e1e" stroke-width="1.1"/>
<line x1="1099.5" y1="361.61" x2="1099.5" y2="371.11" stroke="#e41e1e" stroke-width="1.1"/>
<line x1="1099.5" y1="480.95" x2="1099.5" y2="490.45" stroke="#e41e1e" stroke-width="1.1"/>
<line x1="782.5" y1="360.67" x2="782.5" y2="370.17" stroke="#e41e1e" stroke-width="1.1"/>
<line x1="782.5" y1="481.78" x2="782.5" y2="491.28" stroke="#e41e1e" stroke-width="1.1"/>
<line x1="1087.5" y1="360.71" x2="1087.5" y2="370.21" stroke="#e41e1e" stroke-width="1.1"/>
<line x1="1087.5" y1="481.75" x2="1087.5" y2="491.25" stroke="#e41e1e" stroke-width="1.1"/>
<line x1="795.5" y1="359.7" x2="795.5" y2="369.2" stroke="#e41e1e" stroke-width="1.1"/>
<line x1="795.5" y1="482.64" x2="795.5" y2="492.14" stroke="#e41e1e" stroke-width="1.1"/>
<line x1="1074.5" y1="359.74" x2="1074.5" y2="369.24" stroke="#e41e1e" stroke-width="1.1"/>
<line x1="1074.5" y1="482.61" x2="1074.5" y2="492.11" stroke="#e41e1e" stroke-width="1.1"/>
<line x1="808.5" y1="358.73" x2="808.5" y2="368.23" stroke="#e41e1e" stroke-width="1.1"/>
<line x1="808.5" y1="483.5" x2="808.5" y2="493" stroke="#e41e1e" stroke-width="1.1"/>
<line x1="1061.5" y1="358.77" x2="1061.5" y2="368.27" stroke="#e41e1e" stroke-width="1.1"/>
<line x1="1061.5" y1="483.47" x2="1061.5" y2="492.97" stroke="#e41e1e" stroke-width="1.1"/>
<line x1="821.5" y1="357.87" x2="821.5" y2="367.37" stroke="#e41e1e" stroke-width="1.1"/>
<line x1="821.5" y1="484.43" x2="821.5" y2="493.93" stroke="#e41e1e" stroke-width="1.1"/>
<line x1="1048.5" y1="357.91" x2="1048.5" y2="367.41" stroke="#e41e1e" stroke-width="1.1"/>
<line x1="1048.5" y1="484.38" x2="1048.5" y2="493.88" stroke="#e41e1e" stroke-width="1.1"/>
<line x1="834.5" y1="357.01" x2="834.5" y2="366.51" stroke="#e41e1e" stroke-width="1.1"/>
<line x1="834.5" y1="485.6" x2="834.5" y2="495.1" stroke="#e41e1e" stroke-width="1.1"/>
<line x1="1035.5" y1="357.05" x2="1035.5" y2="366.55" stroke="#e41e1e" stroke-width="1.1"/>
<line x1="1035.5" y1="485.55" x2="1035.5" y2="495.05" stroke="#e41e1e" stroke-width="1.1"/>
<line x1="847.5" y1="356.15" x2="847.5" y2="365.65" stroke="#e41e1e" stroke-width="1.1"/>
<line x1="847.5" y1="486.77" x2="847.5" y2="496.27" stroke="#e41e1e" stroke-width="1.1"/>
<line x1="1022.5" y1="356.18" x2="1022.5" y2="365.68" stroke="#e41e1e" stroke-width="1.1"/>
<line x1="1022.5" y1="486.73" x2="1022.5" y2="496.23" stroke="#e41e1e" stroke-width="1.1"/>
<line x1="860.5" y1="355.29" x2="860.5" y2="364.79" stroke="#e41e1e" stroke-width="1.1"/>
<line x1="860.5" y1="487.94" x2="860.5" y2="497.44" stroke="#e41e1e" stroke-width="1.1"/>
<line x1="1009.5" y1="355.32" x2="1009.5" y2="364.82" stroke="#e41e1e" stroke-width="1.1"/>
<line x1="1009.5" y1="487.9" x2="1009.5" y2="497.4" stroke="#e41e1e" stroke-width="1.1"/>
<line x1="873.5" y1="354.43" x2="873.5" y2="363.93" stroke="#e41e1e" stroke-width="1.1"/>
<line x1="873.5" y1="489.12" x2="873.5" y2="498.62" stroke="#e41e1e" stroke-width="1.1"/>
<line x1="996.5" y1="354.46" x2="996.5" y2="363.96" stroke="#e41e1e" stroke-width="1.1"/>
<line x1="996.5" y1="489.07" x2="996.5" y2="498.57" stroke="#e41e1e" stroke-width="1.1"/>
<line x1="886.5" y1="353.57" x2="886.5" y2="363.07" stroke="#e41e1e" stroke-width="1.1"/>
<line x1="886.5" y1="490.29" x2="886.5" y2="499.79" stroke="#e41e1e" stroke-width="1.1"/>
<line x1="983.5" y1="353.6" x2="983.5" y2="363.1" stroke="#e41e1e" stroke-width="1.1"/>
<line x1="983.5" y1="490.24" x2="983.5" y2="499.74" stroke="#e41e1e" stroke-width="1.1"/>
<line x1="899.5" y1="352.76" x2="899.5" y2="362.26" stroke="#e41e1e" stroke-width="1.1"/>
<line x1="899.5" y1="491.41" x2="899.5" y2="500.91" stroke="#e41e1e" stroke-width="1.1"/>
<line x1="970.5" y1="352.78" x2="970.5" y2="362.28" stroke="#e41e1e" stroke-width="1.1"/>
<line x1="970.5" y1="491.37" x2="970.5" y2="500.87" stroke="#e41e1e" stroke-width="1.1"/>
<line x1="922.5" y1="351" x2="922.5" y2="361" stroke="#e41e1e" stroke-width="1.1"/>
<line x1="947.5" y1="351" x2="947.5" y2="361" stroke="#e41e1e" stroke-width="1.1"/>
<line x1="745.5" y1="315" x2="745.5" y2="362.09" stroke="#e41e1e" stroke-width="0.8" stroke-dasharray="4 3"/>
<line x1="745.5" y1="490.19" x2="745.5" y2="545" stroke="#e41e1e" stroke-width="0.8" stroke-dasharray="4 3"/>
<line x1="1129.2" y1="315" x2="1129.2" y2="362.18" stroke="#e41e1e" stroke-width="0.8" stroke-dasharray="4 3"/>
<line x1="1129.2" y1="490.12" x2="1129.2" y2="545" stroke="#e41e1e" stroke-width="0.8" stroke-dasharray="4 3"/>
<path d="M566 397.5 l3 -2.5 l3 2.5 l-3 2.5z" fill="#e41e1e"/>
<line x1="569" y1="397.5" x2="588" y2="397.5" stroke="#e41e1e" stroke-width="0.8"/>
<rect x="572" y="394.5" width="8" height="1.4" fill="#e41e1e" opacity="0.8"/>
<path d="M566 434.5 l3 -2.5 l3 2.5 l-3 2.5z" fill="#e41e1e"/>
<line x1="569" y1="434.5" x2="588" y2="434.5" stroke="#e41e1e" stroke-width="0.8"/>
<rect x="572" y="431.5" width="8" height="1.4" fill="#e41e1e" opacity="0.8"/>
<path d="M566 442.5 l3 -2.5 l3 2.5 l-3 2.5z" fill="#e41e1e"/>
<line x1="569" y1="442.5" x2="588" y2="442.5" stroke="#e41e1e" stroke-width="0.8"/>
<rect x="572" y="439.5" width="8" height="1.4" fill="#e41e1e" opacity="0.8"/>
<path d="M566 457.5 l3 -2.5 l3 2.5 l-3 2.5z" fill="#e41e1e"/>
<line x1="569" y1="457.5" x2="588" y2="457.5" stroke="#e41e1e" stroke-width="0.8"/>
<rect x="572" y="454.5" width="8" height="1.4" fill="#e41e1e" opacity="0.8"/>
<path d="M787 386 l2.5 -2 l2.5 2 l-2.5 2z" fill="#e41e1e"/>
<rect x="792" y="384.5" width="10" height="1.2" fill="#e41e1e" opacity="0.8"/>
<path d="M916 371 l2.5 -2 l2.5 2 l-2.5 2z" fill="#e41e1e"/>
<rect x="921" y="369.5" width="10" height="1.2" fill="#e41e1e" opacity="0.8"/>
<path d="M1016 371 l2.5 -2 l2.5 2 l-2.5 2z" fill="#e41e1e"/>
<rect x="1021" y="369.5" width="10" height="1.2" fill="#e41e1e" opacity="0.8"/>
<path d="M935 463 l2.5 -2 l2.5 2 l-2.5 2z" fill="#e41e1e"/>
<rect x="940" y="461.5" width="10" height="1.2" fill="#e41e1e" opacity="0.8"/>
<path d="M815 476 l2.5 -2 l2.5 2 l-2.5 2z" fill="#e41e1e"/>
<rect x="820" y="474.5" width="10" height="1.2" fill="#e41e1e" opacity="0.8"/>
<path d="M1130 476 l2.5 -2 l2.5 2 l-2.5 2z" fill="#e41e1e"/>
<rect x="1135" y="474.5" width="10" height="1.2" fill="#e41e1e" opacity="0.8"/>
<path d="M680 548V554H690" fill="none" stroke="#e41e1e" stroke-width="0.8"/>
<path d="M690 554 l2.5 -2 l2.5 2 l-2.5 2z" fill="#e41e1e"/>
<rect x="696" y="553" width="10" height="1.2" fill="#e41e1e" opacity="0.8"/>
<path d="M756 548V554H766" fill="none" stroke="#e41e1e" stroke-width="0.8"/>
<path d="M766 554 l2.5 -2 l2.5 2 l-2.5 2z" fill="#e41e1e"/>
<rect x="772" y="553" width="10" height="1.2" fill="#e41e1e" opacity="0.8"/>
<path d="M1045 548V554H1055" fill="none" stroke="#e41e1e" stroke-width="0.8"/>
<path d="M1055 554 l2.5 -2 l2.5 2 l-2.5 2z" fill="#e41e1e"/>
<rect x="1061" y="553" width="10" height="1.2" fill="#e41e1e" opacity="0.8"/>
<path d="M1122 548V554H1132" fill="none" stroke="#e41e1e" stroke-width="0.8"/>
<path d="M1132 554 l2.5 -2 l2.5 2 l-2.5 2z" fill="#e41e1e"/>
<rect x="1138" y="553" width="10" height="1.2" fill="#e41e1e" opacity="0.8"/>
<rect x="1024.05" y="375.54" width="4.61" height="1.2" fill="#e41e1e" opacity="0.8"/>
<rect x="855.76" y="373.2" width="4.52" height="1.2" fill="#e41e1e" opacity="0.8"/>
<rect x="662.12" y="381.66" width="4.65" height="1.2" fill="#e41e1e" opacity="0.8"/>
<rect x="674.88" y="381.52" width="4.73" height="1.2" fill="#e41e1e" opacity="0.8"/>
<rect x="874.04" y="487.19" width="3.14" height="1.2" fill="#e41e1e" opacity="0.8"/>
<rect x="1146.5" y="377.79" width="4.71" height="1.2" fill="#e41e1e" opacity="0.8"/>
<rect x="700.8" y="380.63" width="4.64" height="1.2" fill="#e41e1e" opacity="0.8"/>
<rect x="677.05" y="471.04" width="5.33" height="1.2" fill="#e41e1e" opacity="0.8"/>
<rect x="914.71" y="483.48" width="4.08" height="1.2" fill="#e41e1e" opacity="0.8"/>
<rect x="786.57" y="373.05" width="4.72" height="1.2" fill="#e41e1e" opacity="0.8"/>
<rect x="949.87" y="477.43" width="5.19" height="1.2" fill="#e41e1e" opacity="0.8"/>
<rect x="809.88" y="471.72" width="3.49" height="1.2" fill="#e41e1e" opacity="0.8"/>
<rect x="841.81" y="479.23" width="4.27" height="1.2" fill="#e41e1e" opacity="0.8"/>
<rect x="1207.59" y="472.14" width="4.02" height="1.2" fill="#e41e1e" opacity="0.8"/>
<rect x="1110.17" y="471.05" width="4.42" height="1.2" fill="#e41e1e" opacity="0.8"/>
<rect x="1031.85" y="374.56" width="5.1" height="1.2" fill="#e41e1e" opacity="0.8"/>
<rect x="1021.81" y="486.95" width="5.47" height="1.2" fill="#e41e1e" opacity="0.8"/>
<rect x="807.91" y="374.57" width="5.82" height="1.2" fill="#e41e1e" opacity="0.8"/>
<rect x="931.28" y="390.72" width="3.86" height="1.2" fill="#e41e1e" opacity="0.8"/>
<rect x="1075.63" y="482.41" width="3.24" height="1.2" fill="#e41e1e" opacity="0.8"/>
<rect x="1161.2" y="476.53" width="5.12" height="1.2" fill="#e41e1e" opacity="0.8"/>
<rect x="1222.02" y="382.63" width="3.45" height="1.2" fill="#e41e1e" opacity="0.8"/>
<rect x="743.97" y="472.39" width="5.49" height="1.2" fill="#e41e1e" opacity="0.8"/>
<rect x="747.58" y="471.52" width="4.83" height="1.2" fill="#e41e1e" opacity="0.8"/>
<rect x="1146.93" y="382.64" width="4.37" height="1.2" fill="#e41e1e" opacity="0.8"/>
<rect x="1153.88" y="475.55" width="4.19" height="1.2" fill="#e41e1e" opacity="0.8"/>
<rect x="1220.95" y="382.29" width="3.31" height="1.2" fill="#e41e1e" opacity="0.8"/>
<rect x="1199.88" y="381.85" width="4.84" height="1.2" fill="#e41e1e" opacity="0.8"/>
<rect x="727.64" y="473.17" width="4.42" height="1.2" fill="#e41e1e" opacity="0.8"/>
<rect x="708.06" y="477.37" width="4.45" height="1.2" fill="#e41e1e" opacity="0.8"/>
<rect x="690.67" y="472.11" width="4.44" height="1.2" fill="#e41e1e" opacity="0.8"/>
<rect x="761.08" y="382.51" width="5.27" height="1.2" fill="#e41e1e" opacity="0.8"/>
<rect x="815.87" y="471.36" width="4.56" height="1.2" fill="#e41e1e" opacity="0.8"/>
<rect x="1175.87" y="471.42" width="4.91" height="1.2" fill="#e41e1e" opacity="0.8"/>
<rect x="1087.41" y="473.05" width="5.22" height="1.2" fill="#e41e1e" opacity="0.8"/>
<rect x="773.78" y="377.61" width="5.97" height="1.2" fill="#e41e1e" opacity="0.8"/>
<rect x="1106.17" y="472.23" width="4.34" height="1.2" fill="#e41e1e" opacity="0.8"/>
<rect x="1192.84" y="474.8" width="3.24" height="1.2" fill="#e41e1e" opacity="0.8"/>
<rect x="700.27" y="472.34" width="4.87" height="1.2" fill="#e41e1e" opacity="0.8"/>
<rect x="1171.18" y="473.24" width="5.4" height="1.2" fill="#e41e1e" opacity="0.8"/>
<rect x="690.02" y="381.42" width="4.43" height="1.2" fill="#e41e1e" opacity="0.8"/>
<rect x="745.33" y="473.43" width="4.39" height="1.2" fill="#e41e1e" opacity="0.8"/>
<rect x="1078.58" y="371.6" width="3.08" height="1.2" fill="#e41e1e" opacity="0.8"/>
<rect x="1193.11" y="380.02" width="3.04" height="1.2" fill="#e41e1e" opacity="0.8"/>
<rect x="1212.83" y="382.33" width="4.3" height="1.2" fill="#e41e1e" opacity="0.8"/>
<rect x="1154.33" y="471.71" width="3.64" height="1.2" fill="#e41e1e" opacity="0.8"/>
<rect x="935.69" y="463.39" width="3.98" height="1.2" fill="#e41e1e" opacity="0.8"/>
<rect x="675.93" y="474.46" width="5.48" height="1.2" fill="#e41e1e" opacity="0.8"/>
<rect x="1158.12" y="377.45" width="5.62" height="1.2" fill="#e41e1e" opacity="0.8"/>
<rect x="1098.14" y="378.7" width="3.52" height="1.2" fill="#e41e1e" opacity="0.8"/>
<rect x="945.83" y="435.44" width="5.35" height="1.2" fill="#e41e1e" opacity="0.8"/>
<rect x="702.6" y="471.77" width="3.13" height="1.2" fill="#e41e1e" opacity="0.8"/>
<rect x="697.67" y="380.12" width="4.33" height="1.2" fill="#e41e1e" opacity="0.8"/>
<rect x="942.18" y="453.7" width="4.36" height="1.2" fill="#e41e1e" opacity="0.8"/>
<rect x="1195.49" y="474.22" width="5.77" height="1.2" fill="#e41e1e" opacity="0.8"/>
<rect x="1166.73" y="473.19" width="3.36" height="1.2" fill="#e41e1e" opacity="0.8"/>
<rect x="900.85" y="372.57" width="3.72" height="1.2" fill="#e41e1e" opacity="0.8"/>
<rect x="683.14" y="381.65" width="5.82" height="1.2" fill="#e41e1e" opacity="0.8"/>
<rect x="789.33" y="372.35" width="4.19" height="1.2" fill="#e41e1e" opacity="0.8"/>
<rect x="927.48" y="493.09" width="5.5" height="1.2" fill="#e41e1e" opacity="0.8"/>
<rect x="735.26" y="474.98" width="4.26" height="1.2" fill="#e41e1e" opacity="0.8"/>
<rect x="814.32" y="382.44" width="5.92" height="1.2" fill="#e41e1e" opacity="0.8"/>
<rect x="701.82" y="378.88" width="3.81" height="1.2" fill="#e41e1e" opacity="0.8"/>
<rect x="716.44" y="477.49" width="4.22" height="1.2" fill="#e41e1e" opacity="0.8"/>
<rect x="931.82" y="405.19" width="3.84" height="1.2" fill="#e41e1e" opacity="0.8"/>
<rect x="1111.76" y="479.97" width="5.82" height="1.2" fill="#e41e1e" opacity="0.8"/>
<rect x="689.41" y="382.34" width="4.36" height="1.2" fill="#e41e1e" opacity="0.8"/>
<rect x="1186.73" y="380.03" width="5.81" height="1.2" fill="#e41e1e" opacity="0.8"/>
<rect x="1211.84" y="470.63" width="4.89" height="1.2" fill="#e41e1e" opacity="0.8"/>
<rect x="799.61" y="380.43" width="3.05" height="1.2" fill="#e41e1e" opacity="0.8"/>
<rect x="1072.52" y="472.6" width="3.74" height="1.2" fill="#e41e1e" opacity="0.8"/>
<rect x="962.08" y="478.5" width="5.91" height="1.2" fill="#e41e1e" opacity="0.8"/>
<rect x="775.44" y="373.94" width="4.21" height="1.2" fill="#e41e1e" opacity="0.8"/>
<rect x="845.06" y="373.38" width="3.39" height="1.2" fill="#e41e1e" opacity="0.8"/>
<rect x="681.73" y="381.97" width="3.17" height="1.2" fill="#e41e1e" opacity="0.8"/>
<rect x="938.51" y="490.82" width="4.8" height="1.2" fill="#e41e1e" opacity="0.8"/>
<rect x="1048.68" y="373.71" width="3.56" height="1.2" fill="#e41e1e" opacity="0.8"/>
<rect x="798.73" y="475.05" width="5.92" height="1.2" fill="#e41e1e" opacity="0.8"/>
<rect x="1209.74" y="381.5" width="4.01" height="1.2" fill="#e41e1e" opacity="0.8"/>
<rect x="689.5" y="379.68" width="4.51" height="1.2" fill="#e41e1e" opacity="0.8"/>
<rect x="642.92" y="406.01" width="3.27" height="1.2" fill="#e41e1e" opacity="0.8"/>
<rect x="875.71" y="370.01" width="3.07" height="1.2" fill="#e41e1e" opacity="0.8"/>
<rect x="1082.82" y="479.35" width="5.29" height="1.2" fill="#e41e1e" opacity="0.8"/>
<rect x="1065.2" y="376.19" width="3.13" height="1.2" fill="#e41e1e" opacity="0.8"/>
<rect x="1132.82" y="382.09" width="5.73" height="1.2" fill="#e41e1e" opacity="0.8"/>
<rect x="1084.19" y="377.8" width="5.48" height="1.2" fill="#e41e1e" opacity="0.8"/>
<rect x="984.6" y="477.54" width="5.05" height="1.2" fill="#e41e1e" opacity="0.8"/>
<rect x="658.38" y="381.21" width="4.13" height="1.2" fill="#e41e1e" opacity="0.8"/>
<rect x="906.32" y="369.52" width="3.06" height="1.2" fill="#e41e1e" opacity="0.8"/>
<rect x="795.64" y="376.04" width="4.98" height="1.2" fill="#e41e1e" opacity="0.8"/>
<rect x="678.97" y="382.02" width="5.54" height="1.2" fill="#e41e1e" opacity="0.8"/>
<rect x="778.52" y="472.89" width="4.48" height="1.2" fill="#e41e1e" opacity="0.8"/>
<rect x="685.71" y="471.46" width="4.86" height="1.2" fill="#e41e1e" opacity="0.8"/>
<rect x="718.73" y="379.39" width="5.08" height="1.2" fill="#e41e1e" opacity="0.8"/>
<rect x="944.76" y="423.46" width="4.4" height="1.2" fill="#e41e1e" opacity="0.8"/>
<rect x="709.92" y="382.33" width="5.81" height="1.2" fill="#e41e1e" opacity="0.8"/>
<rect x="650.33" y="472.39" width="5.98" height="1.2" fill="#e41e1e" opacity="0.8"/>
<rect x="868.24" y="479.26" width="5.79" height="1.2" fill="#e41e1e" opacity="0.8"/>
<line x1="640" y1="398" x2="640" y2="452" stroke="#e41e1e" stroke-width="1.2"/>
<line x1="1229.5" y1="398" x2="1229.5" y2="452" stroke="#e41e1e" stroke-width="1.2"/>
<line x1="935.3" y1="398" x2="935.3" y2="452" stroke="#e41e1e" stroke-width="1.2"/>
<rect x="921" y="427" width="28" height="1.6" fill="#3cb43c"/>
<rect x="924" y="429" width="22" height="0.8" fill="#555"/>
<line x1="590.2" y1="278" x2="590.2" y2="577" stroke="#544630" stroke-width="1.35" stroke-dasharray="10.5 2.6 3 2.6"/>
<line x1="666.82" y1="278" x2="666.82" y2="577" stroke="#544630" stroke-width="1.35" stroke-dasharray="10.5 2.6 3 2.6"/>
<line x1="743.44" y1="278" x2="743.44" y2="577" stroke="#544630" stroke-width="1.35" stroke-dasharray="10.5 2.6 3 2.6"/>
<line x1="820.06" y1="278" x2="820.06" y2="577" stroke="#544630" stroke-width="1.35" stroke-dasharray="10.5 2.6 3 2.6"/>
<line x1="896.68" y1="278" x2="896.68" y2="577" stroke="#544630" stroke-width="1.35" stroke-dasharray="10.5 2.6 3 2.6"/>
<line x1="973.3" y1="278" x2="973.3" y2="577" stroke="#544630" stroke-width="1.35" stroke-dasharray="10.5 2.6 3 2.6"/>
<line x1="1049.92" y1="278" x2="1049.92" y2="577" stroke="#544630" stroke-width="1.35" stroke-dasharray="10.5 2.6 3 2.6"/>
<line x1="1126.54" y1="278" x2="1126.54" y2="577" stroke="#544630" stroke-width="1.35" stroke-dasharray="10.5 2.6 3 2.6"/>
<line x1="1203.16" y1="278" x2="1203.16" y2="577" stroke="#544630" stroke-width="1.35" stroke-dasharray="10.5 2.6 3 2.6"/>
<line x1="1279.78" y1="278" x2="1279.78" y2="577" stroke="#544630" stroke-width="1.35" stroke-dasharray="10.5 2.6 3 2.6"/>
<line x1="558" y1="311.6" x2="1322" y2="311.6" stroke="#544630" stroke-width="1.35" stroke-dasharray="10.5 2.6 3 2.6"/>
<line x1="558" y1="388.2" x2="1322" y2="388.2" stroke="#544630" stroke-width="1.35" stroke-dasharray="10.5 2.6 3 2.6"/>
<line x1="558" y1="465" x2="1322" y2="465" stroke="#544630" stroke-width="1.35" stroke-dasharray="10.5 2.6 3 2.6"/>
<line x1="558" y1="541.5" x2="1322" y2="541.5" stroke="#544630" stroke-width="1.35" stroke-dasharray="10.5 2.6 3 2.6"/>
<circle cx="590.2" cy="274" r="3.3" fill="#fff" stroke="#5a4c36" stroke-width="1"/>
<rect x="589.2" y="273.4" width="2" height="1.2" fill="#777"/>
<circle cx="590.2" cy="581" r="3.3" fill="#fff" stroke="#5a4c36" stroke-width="1"/>
<rect x="589.2" y="580.4" width="2" height="1.2" fill="#777"/>
<circle cx="666.82" cy="274" r="3.3" fill="#fff" stroke="#5a4c36" stroke-width="1"/>
<rect x="665.82" y="273.4" width="2" height="1.2" fill="#777"/>
<circle cx="666.82" cy="581" r="3.3" fill="#fff" stroke="#5a4c36" stroke-width="1"/>
<rect x="665.82" y="580.4" width="2" height="1.2" fill="#777"/>
<circle cx="743.44" cy="274" r="3.3" fill="#fff" stroke="#5a4c36" stroke-width="1"/>
<rect x="742.44" y="273.4" width="2" height="1.2" fill="#777"/>
<circle cx="743.44" cy="581" r="3.3" fill="#fff" stroke="#5a4c36" stroke-width="1"/>
<rect x="742.44" y="580.4" width="2" height="1.2" fill="#777"/>
<circle cx="820.06" cy="274" r="3.3" fill="#fff" stroke="#5a4c36" stroke-width="1"/>
<rect x="819.06" y="273.4" width="2" height="1.2" fill="#777"/>
<circle cx="820.06" cy="581" r="3.3" fill="#fff" stroke="#5a4c36" stroke-width="1"/>
<rect x="819.06" y="580.4" width="2" height="1.2" fill="#777"/>
<circle cx="896.68" cy="274" r="3.3" fill="#fff" stroke="#5a4c36" stroke-width="1"/>
<rect x="895.68" y="273.4" width="2" height="1.2" fill="#777"/>
<circle cx="896.68" cy="581" r="3.3" fill="#fff" stroke="#5a4c36" stroke-width="1"/>
<rect x="895.68" y="580.4" width="2" height="1.2" fill="#777"/>
<circle cx="973.3" cy="274" r="3.3" fill="#fff" stroke="#5a4c36" stroke-width="1"/>
<rect x="972.3" y="273.4" width="2" height="1.2" fill="#777"/>
<circle cx="973.3" cy="581" r="3.3" fill="#fff" stroke="#5a4c36" stroke-width="1"/>
<rect x="972.3" y="580.4" width="2" height="1.2" fill="#777"/>
<circle cx="1049.92" cy="274" r="3.3" fill="#fff" stroke="#5a4c36" stroke-width="1"/>
<rect x="1048.92" y="273.4" width="2" height="1.2" fill="#777"/>
<circle cx="1049.92" cy="581" r="3.3" fill="#fff" stroke="#5a4c36" stroke-width="1"/>
<rect x="1048.92" y="580.4" width="2" height="1.2" fill="#777"/>
<circle cx="1126.54" cy="274" r="3.3" fill="#fff" stroke="#5a4c36" stroke-width="1"/>
<rect x="1125.54" y="273.4" width="2" height="1.2" fill="#777"/>
<circle cx="1126.54" cy="581" r="3.3" fill="#fff" stroke="#5a4c36" stroke-width="1"/>
<rect x="1125.54" y="580.4" width="2" height="1.2" fill="#777"/>
<circle cx="1203.16" cy="274" r="3.3" fill="#fff" stroke="#5a4c36" stroke-width="1"/>
<rect x="1202.16" y="273.4" width="2" height="1.2" fill="#777"/>
<circle cx="1203.16" cy="581" r="3.3" fill="#fff" stroke="#5a4c36" stroke-width="1"/>
<rect x="1202.16" y="580.4" width="2" height="1.2" fill="#777"/>
<circle cx="1279.78" cy="274" r="3.3" fill="#fff" stroke="#5a4c36" stroke-width="1"/>
<rect x="1278.78" y="273.4" width="2" height="1.2" fill="#777"/>
<circle cx="1279.78" cy="581" r="3.3" fill="#fff" stroke="#5a4c36" stroke-width="1"/>
<rect x="1278.78" y="580.4" width="2" height="1.2" fill="#777"/>
<circle cx="554" cy="311.6" r="3.3" fill="#fff" stroke="#5a4c36" stroke-width="1"/>
<rect x="553" y="311" width="2" height="1.2" fill="#777"/>
<circle cx="1326" cy="311.6" r="3.3" fill="#fff" stroke="#5a4c36" stroke-width="1"/>
<rect x="1325" y="311" width="2" height="1.2" fill="#777"/>
<circle cx="554" cy="388.2" r="3.3" fill="#fff" stroke="#5a4c36" stroke-width="1"/>
<rect x="553" y="387.6" width="2" height="1.2" fill="#777"/>
<circle cx="1326" cy="388.2" r="3.3" fill="#fff" stroke="#5a4c36" stroke-width="1"/>
<rect x="1325" y="387.6" width="2" height="1.2" fill="#777"/>
<circle cx="554" cy="465" r="3.3" fill="#fff" stroke="#5a4c36" stroke-width="1"/>
<rect x="553" y="464.4" width="2" height="1.2" fill="#777"/>
<circle cx="1326" cy="465" r="3.3" fill="#fff" stroke="#5a4c36" stroke-width="1"/>
<rect x="1325" y="464.4" width="2" height="1.2" fill="#777"/>
<circle cx="554" cy="541.5" r="3.3" fill="#fff" stroke="#5a4c36" stroke-width="1"/>
<rect x="553" y="540.9" width="2" height="1.2" fill="#777"/>
<circle cx="1326" cy="541.5" r="3.3" fill="#fff" stroke="#5a4c36" stroke-width="1"/>
<rect x="1325" y="540.9" width="2" height="1.2" fill="#777"/>
<circle cx="590.2" cy="311.6" r="1.6" fill="#222"/>
<circle cx="590.2" cy="388.2" r="1.6" fill="#222"/>
<circle cx="590.2" cy="465" r="1.6" fill="#222"/>
<circle cx="590.2" cy="541.5" r="1.6" fill="#222"/>
<circle cx="666.82" cy="311.6" r="1.6" fill="#222"/>
<circle cx="666.82" cy="388.2" r="1.6" fill="#222"/>
<circle cx="666.82" cy="465" r="1.6" fill="#222"/>
<circle cx="666.82" cy="541.5" r="1.6" fill="#222"/>
<circle cx="743.44" cy="311.6" r="1.6" fill="#222"/>
<circle cx="743.44" cy="388.2" r="1.6" fill="#222"/>
<circle cx="743.44" cy="465" r="1.6" fill="#222"/>
<circle cx="743.44" cy="541.5" r="1.6" fill="#222"/>
<circle cx="820.06" cy="311.6" r="1.6" fill="#222"/>
<circle cx="820.06" cy="388.2" r="1.6" fill="#222"/>
<circle cx="820.06" cy="465" r="1.6" fill="#222"/>
<circle cx="820.06" cy="541.5" r="1.6" fill="#222"/>
<circle cx="896.68" cy="311.6" r="1.6" fill="#222"/>
<circle cx="896.68" cy="388.2" r="1.6" fill="#222"/>
<circle cx="896.68" cy="465" r="1.6" fill="#222"/>
<circle cx="896.68" cy="541.5" r="1.6" fill="#222"/>
<circle cx="973.3" cy="311.6" r="1.6" fill="#222"/>
<circle cx="973.3" cy="388.2" r="1.6" fill="#222"/>
<circle cx="973.3" cy="465" r="1.6" fill="#222"/>
<circle cx="973.3" cy="541.5" r="1.6" fill="#222"/>
<circle cx="1049.92" cy="311.6" r="1.6" fill="#222"/>
<circle cx="1049.92" cy="388.2" r="1.6" fill="#222"/>
<circle cx="1049.92" cy="465" r="1.6" fill="#222"/>
<circle cx="1049.92" cy="541.5" r="1.6" fill="#222"/>
<circle cx="1126.54" cy="311.6" r="1.6" fill="#222"/>
<circle cx="1126.54" cy="388.2" r="1.6" fill="#222"/>
<circle cx="1126.54" cy="465" r="1.6" fill="#222"/>
<circle cx="1126.54" cy="541.5" r="1.6" fill="#222"/>
<circle cx="1203.16" cy="311.6" r="1.6" fill="#222"/>
<circle cx="1203.16" cy="388.2" r="1.6" fill="#222"/>
<circle cx="1203.16" cy="465" r="1.6" fill="#222"/>
<circle cx="1203.16" cy="541.5" r="1.6" fill="#222"/>
<circle cx="1279.78" cy="311.6" r="1.6" fill="#222"/>
<circle cx="1279.78" cy="388.2" r="1.6" fill="#222"/>
<circle cx="1279.78" cy="465" r="1.6" fill="#222"/>
<circle cx="1279.78" cy="541.5" r="1.6" fill="#222"/>
<rect x="584" y="305.6" width="701.5" height="242" fill="none" stroke="#1a1a1a" stroke-width="2"/>
<path d="M584 375 L632 371.09" stroke="#1d1d1d" stroke-width="1.6"/>
<path d="M632 371.09 L679 367.26" stroke="#1d1d1d" stroke-width="1.6"/>
<path d="M731.6 362.98 L755.7 361.18" stroke="#1d1d1d" stroke-width="1.4"/>
<path d="M808.3 357.25 L906 351" stroke="#1d1d1d" stroke-width="1.4"/>
<path d="M965 351 L1062.5 357.34" stroke="#1d1d1d" stroke-width="1.4"/>
<path d="M1113.7 361.17 L1139.3 363.09" stroke="#1d1d1d" stroke-width="1.4"/>
<path d="M1190.4 367.25 L1285.5 375" stroke="#1d1d1d" stroke-width="1.6"/>
<path d="M584 477.6 L679 485.21" stroke="#1d1d1d" stroke-width="1.6"/>
<path d="M731.6 489.41 L755.7 491" stroke="#1d1d1d" stroke-width="1.4"/>
<path d="M808.3 494.49 L832.4 496.41" stroke="#1d1d1d" stroke-width="1.4"/>
<path d="M1037 496.42 L1062.5 494.4" stroke="#1d1d1d" stroke-width="1.4"/>
<path d="M1113.7 491.01 L1139.3 489.31" stroke="#1d1d1d" stroke-width="1.4"/>
<path d="M1190.4 485.22 L1285.5 477.6" stroke="#1d1d1d" stroke-width="1.6"/>
<path d="M679 306V367.26 M679 485.21V547.5 M1190.4 306V367.25 M1190.4 485.22V547.5" stroke="#1d1d1d" stroke-width="1.3"/>
<line x1="589" y1="291.5" x2="1281" y2="291.5" stroke="#5cc85c" stroke-width="1.1"/>
<line x1="589" y1="299.5" x2="1281" y2="299.5" stroke="#5cc85c" stroke-width="1.1"/>
<rect x="626.2" y="295" width="5" height="1" fill="#8ad08a"/>
<rect x="702.82" y="295" width="5" height="1" fill="#8ad08a"/>
<rect x="779.44" y="295" width="5" height="1" fill="#8ad08a"/>
<rect x="856.06" y="295" width="5" height="1" fill="#8ad08a"/>
<rect x="932.68" y="295" width="5" height="1" fill="#8ad08a"/>
<rect x="1009.3" y="295" width="5" height="1" fill="#8ad08a"/>
<rect x="1085.92" y="295" width="5" height="1" fill="#8ad08a"/>
<rect x="1162.54" y="295" width="5" height="1" fill="#8ad08a"/>
<rect x="1239.16" y="295" width="5" height="1" fill="#8ad08a"/>
<rect x="931" y="286.5" width="6" height="1" fill="#8ad08a"/>
<line x1="1298.5" y1="311.6" x2="1298.5" y2="541.5" stroke="#5cc85c" stroke-width="1.1"/>
<line x1="1306.5" y1="311.6" x2="1306.5" y2="541.5" stroke="#5cc85c" stroke-width="1.1"/>
<rect x="1302" y="347.9" width="1" height="5" fill="#8ad08a"/>
<rect x="1302" y="424.6" width="1" height="5" fill="#8ad08a"/>
<rect x="1302" y="501.25" width="1" height="5" fill="#8ad08a"/>
<line x1="903" y1="622.3" x2="1278" y2="622.3" stroke="#e84a4a" stroke-width="1.1"/>
<line x1="897" y1="646.4" x2="1272.5" y2="646.4" stroke="#5cc85c" stroke-width="1.1"/>
<text x="1216" y="621.3" font-family="Liberation Sans" font-size="6.8" font-weight="bold" fill="#d82020" textLength="62" lengthAdjust="spacingAndGlyphs">EBENE 02 DECKENSPIEGEL</text>
<text x="1258" y="626.8" font-family="Liberation Sans" font-size="3" fill="#d83030">MASSSTAB 1:100</text>
<text x="1281.5" y="626.5" font-family="Liberation Sans" font-size="12" font-weight="bold" fill="#d82020">1</text>
<text x="1221.5" y="645.6" font-family="Liberation Sans" font-size="6.8" font-weight="bold" fill="#3cba3c" textLength="51" lengthAdjust="spacingAndGlyphs">EBENE 02 GRUNDRISS</text>
<text x="1252" y="651" font-family="Liberation Sans" font-size="3" fill="#3cba3c">MASSSTAB 1:100</text>
<text x="1276.5" y="650.5" font-family="Liberation Sans" font-size="12" font-weight="bold" fill="#3cba3c">1</text>
<circle cx="1353" cy="121.7" r="5.2" fill="none" stroke="#6b5a40" stroke-width="1.2"/>
<path d="M1348.5 119.5L1357.5 124.5M1353 121.7L1351 126.5" stroke="#4a3a2a" stroke-width="1"/>
<line x1="1373.5" y1="99" x2="1373.5" y2="796" stroke="#4a4234" stroke-width="1.1"/>
<line x1="1373.5" y1="486.6" x2="1410" y2="486.6" stroke="#4a443a" stroke-width="1.6"/>
<line x1="1373.5" y1="498.4" x2="1410" y2="498.4" stroke="#4a443a" stroke-width="1.1"/>
<line x1="1373.5" y1="510.3" x2="1410" y2="510.3" stroke="#4a443a" stroke-width="1.1"/>
<line x1="1373.5" y1="523" x2="1410" y2="523" stroke="#4a443a" stroke-width="1.1"/>
<line x1="1373.5" y1="534.5" x2="1410" y2="534.5" stroke="#4a443a" stroke-width="1.1"/>
<line x1="1373.5" y1="546.5" x2="1410" y2="546.5" stroke="#4a443a" stroke-width="1.1"/>
<line x1="1373.5" y1="558.2" x2="1410" y2="558.2" stroke="#4a443a" stroke-width="1.1"/>
<line x1="1373.5" y1="570.7" x2="1410" y2="570.7" stroke="#4a443a" stroke-width="1.1"/>
<line x1="1373.5" y1="581.3" x2="1410" y2="581.3" stroke="#4a443a" stroke-width="1.1"/>
<line x1="1373.5" y1="592.2" x2="1410" y2="592.2" stroke="#4a443a" stroke-width="1.1"/>
<line x1="1373.5" y1="604.5" x2="1410" y2="604.5" stroke="#4a443a" stroke-width="1.6"/>
<line x1="1373.5" y1="653.3" x2="1410" y2="653.3" stroke="#4a443a" stroke-width="1.6"/>
<line x1="1373.5" y1="699.4" x2="1410" y2="699.4" stroke="#4a443a" stroke-width="1.6"/>
<line x1="1373.5" y1="743" x2="1410" y2="743" stroke="#4a443a" stroke-width="1.6"/>
<line x1="1373.5" y1="756" x2="1410" y2="756" stroke="#4a443a" stroke-width="1.1"/>
<line x1="1373.5" y1="767.3" x2="1410" y2="767.3" stroke="#4a443a" stroke-width="1.1"/>
<line x1="1373.5" y1="781" x2="1410" y2="781" stroke="#4a443a" stroke-width="1.1"/>
<line x1="1373.5" y1="793.5" x2="1410" y2="793.5" stroke="#4a443a" stroke-width="1.1"/>
<line x1="1391.4" y1="486.6" x2="1391.4" y2="581.3" stroke="#4a443a" stroke-width="1.2"/>
<line x1="1405.5" y1="767.3" x2="1405.5" y2="793.5" stroke="#4a443a" stroke-width="1"/>
<rect x="1377" y="472.5" width="32" height="0.9" fill="#9a9a9a" opacity="0.6"/>
<rect x="1377" y="475.5" width="32" height="0.9" fill="#9a9a9a" opacity="0.6"/>
<rect x="1377" y="478.5" width="32" height="0.9" fill="#9a9a9a" opacity="0.6"/>
<rect x="1377" y="481.5" width="32" height="0.9" fill="#9a9a9a" opacity="0.6"/>
<text x="1380.5" y="543.5" font-family="Liberation Sans" font-size="8.5"  fill="#222" >C</text>
<text x="1380.5" y="555.5" font-family="Liberation Sans" font-size="8.5"  fill="#222" >B</text>
<text x="1380.5" y="568" font-family="Liberation Sans" font-size="8.5"  fill="#222" >A</text>
<text x="1379.5" y="578.5" font-family="Liberation Sans" font-size="4"  fill="#222" >REV</text>
<text x="1376" y="589.5" font-family="Liberation Sans" font-size="4"  fill="#222" >STATUS</text>
<rect x="1395" y="538.5" width="14" height="1.2" fill="#5ab05a" opacity="0.8"/>
<rect x="1395" y="550.5" width="14" height="1.2" fill="#5ab05a" opacity="0.8"/>
<rect x="1395" y="562.5" width="14" height="1.2" fill="#5ab05a" opacity="0.8"/>
<rect x="1395" y="576.5" width="14" height="1.1" fill="#666"/>
<rect x="1395" y="587.5" width="14" height="1.1" fill="#8ab08a"/>
<text x="1399" y="600" font-family="Liberation Sans" font-size="3.5"  fill="#555" >© 20</text>
<text x="1389.5" y="614" font-family="Liberation Sans" font-size="5.5" font-weight="bold" fill="#222" >KUNDE</text>
<text x="1389.5" y="627" font-family="Liberation Sans" font-size="5.5"  fill="#333" >Menzing</text>
<text x="1389.5" y="633" font-family="Liberation Sans" font-size="5.5"  fill="#333" >80638 M</text>
<text x="1389.5" y="639" font-family="Liberation Sans" font-size="5.5"  fill="#333" >Tel: +49</text>
<text x="1389.5" y="665" font-family="Liberation Sans" font-size="5.5" font-weight="bold" fill="#222" >ARCHIT</text>
<text x="1389.5" y="678" font-family="Liberation Sans" font-size="5.5"  fill="#333" >Raiding</text>
<text x="1389.5" y="684" font-family="Liberation Sans" font-size="5.5"  fill="#333" >81377 M</text>
<text x="1389.5" y="690" font-family="Liberation Sans" font-size="5.5"  fill="#333" >Tel: +49</text>
<text x="1389.5" y="711" font-family="Liberation Sans" font-size="5.5" font-weight="bold" fill="#222" >INGENI</text>
<text x="1389.5" y="724" font-family="Liberation Sans" font-size="5.5"  fill="#333" >Riemer</text>
<text x="1389.5" y="730" font-family="Liberation Sans" font-size="5.5"  fill="#333" >81829 M</text>
<text x="1389.5" y="736" font-family="Liberation Sans" font-size="5.5"  fill="#333" >Tel: +49</text>
<text x="1376.5" y="750" font-family="Liberation Sans" font-size="5.8"  fill="#333" textLength="32" lengthAdjust="spacingAndGlyphs">STANDORT:</text>
<text x="1377.5" y="762.5" font-family="Liberation Sans" font-size="5.8"  fill="#333" textLength="17" lengthAdjust="spacingAndGlyphs">TITEL:</text>
<text x="1401" y="764" font-family="Liberation Sans" font-size="3.5"  fill="#555" >EBE</text>
<text x="1377" y="773" font-family="Liberation Sans" font-size="2.8"  fill="#555" >MASSSTAB</text>
<text x="1380" y="779" font-family="Liberation Sans" font-size="2.8"  fill="#c33" >1:100</text>
<text x="1377" y="786.5" font-family="Liberation Sans" font-size="2.8"  fill="#555" >PROJEKTNR.</text>
<text x="1376" y="792" font-family="Liberation Sans" font-size="2.8"  fill="#555" >3232</text>
<path d="M488 796V100.2H1410" fill="none" stroke="#6b5c44" stroke-width="2"/>
<line x1="487" y1="99.3" x2="1410" y2="99.3" stroke="#d8a0a0" stroke-width="0.8"/>
<line x1="487" y1="796" x2="1410" y2="796" stroke="#6b5c44" stroke-width="2"/>
</g></svg>
</body></html>
